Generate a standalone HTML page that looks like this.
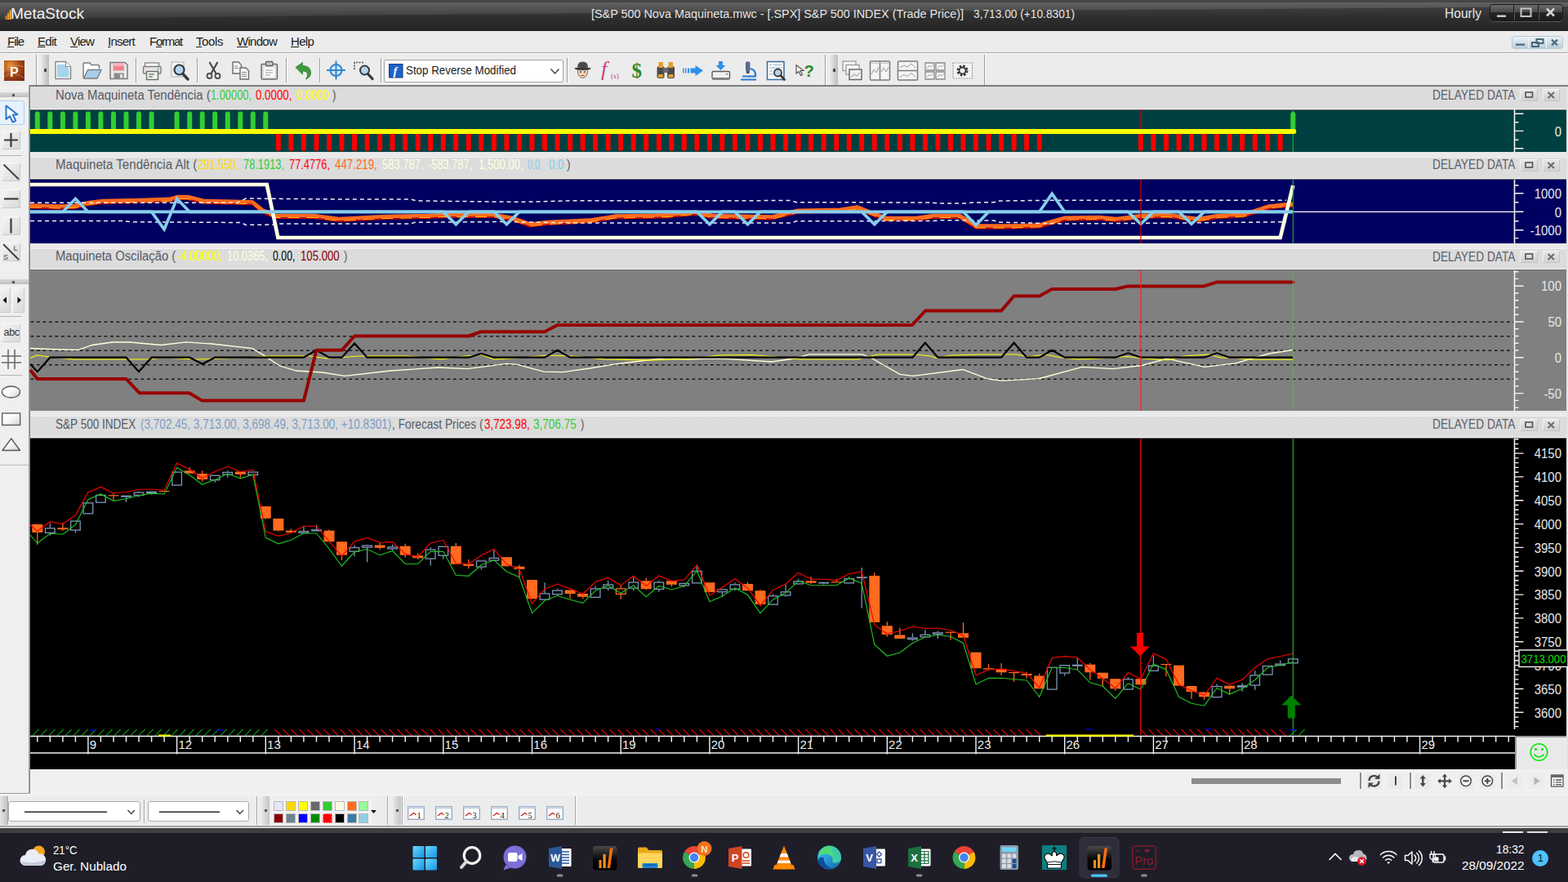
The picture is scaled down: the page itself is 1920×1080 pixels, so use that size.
<!DOCTYPE html>
<html lang="pt"><head><meta charset="utf-8"><title>MetaStock - S&amp;P 500 Nova Maquineta</title>
<style>
html,body{margin:0;padding:0}
body{width:1920px;height:1080px;overflow:hidden;position:relative;background:#ebebeb;font-family:"Liberation Sans",Arial,sans-serif}
.t{position:absolute;white-space:pre;display:block}
.a{position:absolute}
svg{position:absolute;overflow:visible}
.hdr{position:absolute;left:37px;width:1881px;background:#dcdcdc}
.btn{position:absolute;width:21.5px;height:15px;border:1px solid #c4c4c4;border-top-color:#f8f8f8;border-left-color:#f0f0f0;background:linear-gradient(#e6e6e6,#d2d2d2);box-sizing:border-box}
.lb{position:absolute;left:4px;width:26px;height:26px;box-sizing:border-box;border:1px solid #c9c9c9;border-top-color:#fafafa;border-left-color:#f4f4f4;background:linear-gradient(135deg,#f4f4f4,#d9d9d9)}
</style></head><body>

<div class="a" style="left:0;top:0;width:1920px;height:38px;background:linear-gradient(#474747 0,#3f3f3f 20%,#2f2f2f 55%,#242424 100%)"></div>
<svg width="1920" height="38" style="left:0;top:0"><defs><linearGradient id="gl" x1="0" y1="0" x2="0" y2="1"><stop offset="0" stop-color="#fff" stop-opacity=".16"/><stop offset="1" stop-color="#fff" stop-opacity=".05"/></linearGradient></defs><path d="M0,3 H1920 V8 C1500,12 700,14 0,24 Z" fill="url(#gl)"/></svg>
<svg width="14" height="16" style="left:5px;top:8px"><rect x="1.5" y="11" width="2" height="5" fill="#e8861c"/><rect x="4" y="8" width="2" height="8" fill="#f09a28"/><rect x="6.5" y="4.5" width="2.4" height="11.5" fill="#f6a93a"/></svg>
<span class="t" style="left:12.5px;top:6.1px;font-size:19px;line-height:21.831px;color:#f2f2f2;transform:scaleX(1.0027);transform-origin:0 0;">MetaStock</span>
<span class="t" style="left:724.0px;top:7.8px;font-size:15.5px;line-height:17.8095px;color:#e6e6e6;transform:scaleX(0.9276);transform-origin:0 0;">[S&amp;P 500 Nova Maquineta.mwc - [.SPX] S&amp;P 500 INDEX (Trade Price)]</span>
<span class="t" style="left:1192.0px;top:7.8px;font-size:15.5px;line-height:17.8095px;color:#e6e6e6;transform:scaleX(0.8855);transform-origin:0 0;">3,713.00 (+10.8301)</span>
<span class="t" style="left:1769.0px;top:7.8px;font-size:16px;line-height:18.384px;color:#e8e8e8;transform:scaleX(0.9733);transform-origin:0 0;">Hourly</span>
<div class="a" style="left:1825px;top:6px;width:88px;height:19px;border-radius:3.5px;background:linear-gradient(#6a6a6a 0,#4a4a4a 45%,#262626 50%,#1a1a1a 100%);box-shadow:0 0 0 1px #1a1a1a,0 1px 0 1px #555"></div>
<div class="a" style="left:1853px;top:6px;width:1px;height:19px;background:#1c1c1c;box-shadow:1px 0 0 #5a5a5a"></div>
<div class="a" style="left:1883px;top:6px;width:1px;height:19px;background:#1c1c1c;box-shadow:1px 0 0 #5a5a5a"></div>
<svg width="90" height="21" style="left:1824px;top:5px"><rect x="9" y="13.5" width="11" height="2.4" fill="#d0d0d0"/><rect x="38.5" y="5.5" width="12" height="9.5" fill="none" stroke="#c4c4c4" stroke-width="2"/><path d="M70,5.5 L79,14.5 M79,5.5 L70,14.5" stroke="#d4d4d4" stroke-width="2.6"/></svg>
<div class="a" style="left:0;top:38px;width:1920px;height:26px;background:#ececec"></div>
<div class="a" style="left:0;top:64px;width:1920px;height:1px;background:#a9a9a9"></div>
<div class="a" style="left:0;top:65px;width:1920px;height:1px;background:#fbfbfb"></div>
<span class="t" style="left:9px;top:41.9px;font-size:15px;line-height:17px;color:#1c1c1c;letter-spacing:-1.042px"><u>F</u>ile</span>
<span class="t" style="left:46px;top:41.9px;font-size:15px;line-height:17px;color:#1c1c1c;letter-spacing:-0.712px"><u>E</u>dit</span>
<span class="t" style="left:86px;top:41.9px;font-size:15px;line-height:17px;color:#1c1c1c;letter-spacing:-0.810px"><u>V</u>iew</span>
<span class="t" style="left:132px;top:41.9px;font-size:15px;line-height:17px;color:#1c1c1c;letter-spacing:-0.752px"><u>I</u>nsert</span>
<span class="t" style="left:183px;top:41.9px;font-size:15px;line-height:17px;color:#1c1c1c;letter-spacing:-1.250px">F<u>o</u>rmat</span>
<span class="t" style="left:240px;top:41.9px;font-size:15px;line-height:17px;color:#1c1c1c;letter-spacing:-0.403px"><u>T</u>ools</span>
<span class="t" style="left:290px;top:41.9px;font-size:15px;line-height:17px;color:#1c1c1c;letter-spacing:-0.725px"><u>W</u>indow</span>
<span class="t" style="left:356px;top:41.9px;font-size:15px;line-height:17px;color:#1c1c1c;letter-spacing:-0.712px"><u>H</u>elp</span>
<div class="a" style="left:1851.5px;top:44.5px;width:61.5px;height:14.5px;border-radius:3px;background:linear-gradient(#eaf2f7 0,#d3e0e8 50%,#b9cdd8 100%);box-shadow:0 0 0 1px #b7cad6"></div>
<div class="a" style="left:1871px;top:45px;width:1px;height:14px;background:#f4f8fa"></div>
<div class="a" style="left:1893px;top:45px;width:1px;height:14px;background:#f4f8fa"></div>
<svg width="63" height="16" style="left:1851px;top:44px"><rect x="5" y="9.5" width="11" height="2.2" fill="#4b6878"/><rect x="25" y="8" width="8" height="5" fill="none" stroke="#4b6878" stroke-width="2"/><rect x="30.5" y="4" width="8" height="5" fill="none" stroke="#4b6878" stroke-width="2"/><path d="M49,4.5 L56,11.5 M56,4.5 L49,11.5" stroke="#4b6878" stroke-width="2.3"/></svg>
<div class="a" style="left:0;top:66px;width:1920px;height:38px;background:#ececec"></div>
<svg width="26" height="26" style="left:5px;top:73.500px"><defs><radialGradient id="pg" cx=".3" cy=".25" r="1"><stop offset="0" stop-color="#e8923a"/><stop offset=".45" stop-color="#a84a18"/><stop offset="1" stop-color="#6a1e10"/></radialGradient></defs><rect width="25" height="25" fill="url(#pg)"/><path d="M0,14 q8,-12 25,-6 M0,20 q12,-8 25,2" fill="none" stroke="#f0b070" stroke-width=".8" opacity=".6"/><text x="7" y="19.500" font-size="16" font-weight="bold" fill="#f6f6f6">P</text></svg>
<div class="a" style="left:43.5px;top:67px;width:1.300px;height:37px;background:#9c9c9c"></div><div class="a" style="left:44.8px;top:67px;width:1px;height:37px;background:#fbfbfb"></div>
<div class="a" style="left:51px;top:67px;width:9px;height:37px;background:linear-gradient(90deg,#e6e6e6,#bcbcbc)"></div>
<div class="a" style="left:54px;top:84px;width:3px;height:3.500px;background:#4a4a4a"></div>
<svg width="1160" height="38" style="left:60px;top:66px">
<path d="M8,9.500 h12.500 l6,6 v15 h-18.500z" fill="#fafafa" stroke="#8a8a8a" stroke-width="1.500"/><path d="M10,13 h9 l5.500,5 v10.500 h-14.500z" fill="#a6d4ee"/><path d="M20.500,9.500 v6 h6" fill="#fff" stroke="#8a8a8a" stroke-width="1.200"/><path d="M42,29 v-16.500 q0,-1.500 1.500,-1.500 h6.500 l2,2.500 h8 q1.500,0 1.500,1.500 v3" fill="#fdfdfd" stroke="#7c7c7c" stroke-width="1.500"/><path d="M42.500,30 l5,-10.500 h16.500 l-5,10.500z" fill="#a9cdea" stroke="#7c7c7c" stroke-width="1.400" stroke-linejoin="round"/><path d="M75,10.500 h18 l3,3 v17 h-21z" fill="#e9e9e9" stroke="#7c7c7c" stroke-width="1.500"/><rect x="78.500" y="11.500" width="13.500" height="9" fill="#f2828c"/><rect x="78.500" y="11.500" width="13.500" height="3.500" fill="#f8b4ba"/><rect x="79.500" y="23.500" width="12" height="7" fill="#8a8a8a"/><rect x="87" y="25" width="3" height="4.500" fill="#e4e4e4"/><rect x="117.500" y="11" width="17" height="6" fill="#fff" stroke="#7c7c7c" stroke-width="1.200"/><rect x="115.500" y="15.500" width="21.500" height="8.500" rx="1" fill="#e6e6e6" stroke="#7c7c7c" stroke-width="1.400"/><circle cx="133.500" cy="18.500" r="1" fill="#30c030"/><rect x="119.500" y="21.500" width="14" height="10" fill="#eef6ee" stroke="#6c6c6c" stroke-width="1.400"/><path d="M122,25 h7 M122,28 h5" stroke="#444" stroke-width="1.200"/><rect x="150" y="10" width="15" height="18" fill="#f4f4f4" stroke="#b0b0b0" stroke-width="1"/><circle cx="159.500" cy="19.500" r="6" fill="#b4d4f0" stroke="#3a3a3a" stroke-width="2.200"/><path d="M164,24.500 l6,6.500" stroke="#3a3a3a" stroke-width="3.500" stroke-linecap="round"/><path d="M196.500,10 l8,14 M206.500,10 l-8,14" stroke="#4a4a4a" stroke-width="2.200"/><circle cx="196.500" cy="27" r="3" fill="none" stroke="#4a4a4a" stroke-width="1.800"/><circle cx="206.500" cy="27" r="3" fill="none" stroke="#4a4a4a" stroke-width="1.800"/><path d="M225,10 h7 l3.500,3.500 v10.500 h-10.500z" fill="#f4f4f4" stroke="#6c6c6c" stroke-width="1.400"/><path d="M234,17 h7 l3.500,3.500 v10.500 h-10.500z" fill="#f4f4f4" stroke="#6c6c6c" stroke-width="1.400"/><path d="M236,22.500 h6 M236,25 h6 M236,27.500 h6 M227,15 h4 M227,17.500 h5" stroke="#8a8a8a" stroke-width="1"/><rect x="260" y="12.500" width="19.500" height="18.500" rx="1.500" fill="#dcdcdc" stroke="#6c6c6c" stroke-width="1.500"/><rect x="265.500" y="9.500" width="8.500" height="5" rx="1" fill="#c8c8c8" stroke="#5c5c5c" stroke-width="1.300"/><rect x="263" y="16.500" width="13.500" height="12" fill="#fafafa"/><path d="M265,20 h9 M265,23 h9 M265,26 h6" stroke="#9a9a9a" stroke-width="1"/><path d="M302,16.500 l8.500,-6 v4 q10,0 10,9 q0,5 -6,7.500 q2.500,-3 2,-6 q-.5,-4 -6,-4 v4z" fill="#3f9a3f" stroke="#2c7c2c" stroke-width=".800"/><circle cx="351.500" cy="20" r="7" fill="#dceaf6" stroke="#2a86d0" stroke-width="2"/><path d="M351.500,8.500 v23 M340,20 h23" stroke="#2a86d0" stroke-width="2"/><path d="M374,19 v-8.500 h12" fill="none" stroke="#4a4a4a" stroke-width="1.600" stroke-dasharray="2 1.500"/><circle cx="386.500" cy="20" r="5.500" fill="#b4d4f0" stroke="#3a3a3a" stroke-width="2"/><path d="M390.500,24.500 l5.500,6" stroke="#3a3a3a" stroke-width="3.300" stroke-linecap="round"/><ellipse cx="653.500" cy="22" rx="6" ry="7.500" fill="#f2d0b0" stroke="#6a5a4a" stroke-width=".800"/><path d="M643,17.500 q10.500,-3 21,0 q-1,2.500 -10.500,2.500 q-9.500,0 -10.500,-2.500z" fill="#3a3a3a"/><path d="M647,16.500 q0,-7 6.500,-7 q6.500,0 6.500,7z" fill="#4a4a4a"/><circle cx="651" cy="22" r="1" fill="#2a5a9a"/><circle cx="656" cy="22" r="1" fill="#2a5a9a"/><path d="M651.500,26.500 h4" stroke="#a04040" stroke-width="1"/><text x="676" y="27" font-size="26" font-style="italic" fill="#c8407c" font-family="Liberation Serif,serif">f</text><text x="688" y="30" font-size="8.500" fill="#c8407c" font-family="Liberation Serif,serif">(x)</text><text x="713.500" y="29" font-size="25" font-weight="bold" fill="#2c8a2c" font-family="Liberation Serif,serif">$</text><rect x="744.500" y="15" width="9" height="15" rx="2.500" fill="#4a4a4a"/><rect x="757" y="15" width="9" height="15" rx="2.500" fill="#4a4a4a"/><rect x="746.500" y="10" width="5.500" height="7" fill="#e0a030"/><rect x="758.500" y="10" width="5.500" height="7" fill="#e0a030"/><rect x="752" y="17" width="6.500" height="6" fill="#6a6a6a"/><rect x="746" y="25" width="6" height="4" fill="#e0a030"/><rect x="758.500" y="25" width="6" height="4" fill="#e0a030"/><path d="M776,17.500 h1.500 v6 h-1.500z M779,17.500 h1.500 v6 h-1.500z M782,17.500 h2 v6 h-2z M785.500,17.500 h6 v-3.500 l9.500,6.500 l-9.500,6.500 v-3.500 h-6z" fill="#2e90e8"/><path d="M820,9 h5 v5 h3.500 l-6,6 l-6,-6 h3.500z" fill="#2e90e8"/><rect x="812" y="21.500" width="21.500" height="8.500" rx="1" fill="#f0f0f0" stroke="#5a5a5a" stroke-width="1.400"/><rect x="829" y="24" width="2" height="1.500" fill="#30b030"/><path d="M812,31.500 h21.500" stroke="#8a8a8a" stroke-width="1"/><rect x="853" y="9.500" width="5.500" height="12" rx="1.500" fill="#5a6a8a"/><rect x="854" y="21" width="3.500" height="3" fill="#3a4a6a"/><path d="M859,18 q7,2 6,9.500 h-8" fill="none" stroke="#2a7ad0" stroke-width="2.200"/><path d="M847,31.500 h19 M849,27.500 h10" stroke="#2a7ad0" stroke-width="2.200"/><rect x="879.500" y="9.500" width="20.500" height="22" fill="#fbfbfb" stroke="#3a6a9a" stroke-width="1.500"/><path d="M882,13.500 h3 M886.500,13.500 h11 M882,17 h15 M882,21 h4 M882,25 h8" stroke="#9ab0c8" stroke-width="1.200"/><circle cx="892.500" cy="23" r="4.500" fill="#b4d4f0" stroke="#3a3a3a" stroke-width="1.800"/><path d="M896,26.500 l4.500,5" stroke="#3a3a3a" stroke-width="2.800" stroke-linecap="round"/><path d="M915,13.500 v10.500 l3,-2.500 l2.500,5 l2,-1 l-2.500,-5 h4z" fill="#f4f4f4" stroke="#4a4a4a" stroke-width="1.100"/><text x="924.500" y="28" font-size="20" font-weight="bold" fill="#2c8a2c">?</text><rect x="972" y="9" width="16" height="11.500" fill="#f6f6f6" stroke="#9a9a9a" stroke-width="1.300"/><rect x="976" y="13.500" width="16" height="11.500" fill="#f6f6f6" stroke="#9a9a9a" stroke-width="1.300"/><rect x="980" y="19" width="15" height="12.500" fill="#f0f0f0" stroke="#6a6a6a" stroke-width="1.500"/><path d="M982,28.500 l4,-3.500 l3,2 l4,-4" fill="none" stroke="#8a8a8a" stroke-width="1"/><rect x="1005.500" y="9" width="24" height="23" rx="1" fill="#f4f4f4" stroke="#7a7a7a" stroke-width="1.500"/><path d="M1017.500,9 v23" stroke="#7a7a7a" stroke-width="1.500"/><path d="M1007,25 l3,-6 l3,4 l3,-7 M1019,22 l3,-5 l3,5 l3,-6" fill="none" stroke="#9a9a9a" stroke-width="1"/><path d="M1006,11.500 h23" stroke="#c0c0c0" stroke-width="1"/><rect x="1039.500" y="9" width="24" height="23" rx="1" fill="#f4f4f4" stroke="#7a7a7a" stroke-width="1.500"/><path d="M1039.500,20.500 h24" stroke="#7a7a7a" stroke-width="1.500"/><path d="M1042,17 l5,-3 l4,2 l5,-4 l5,5 M1042,28.500 l5,-3 l4,2 l5,-4 l5,5" fill="none" stroke="#9a9a9a" stroke-width="1"/><path d="M1073,11 h11 v9 h-11z M1086,11 h11 v9 h-11z M1073,22 h11 v9 h-11z M1086,22 h11 v9 h-11z" fill="#f4f4f4" stroke="#8a8a8a" stroke-width="1.300"/><path d="M1075,18 l3,-4 l2,2 l3,-3 M1088,18 l3,-4 l2,2 l3,-3 M1075,29 l3,-4 l2,2 l3,-3 M1088,29 l3,-4 l2,2 l3,-3" fill="none" stroke="#a0a0a0" stroke-width=".900"/><rect x="1107" y="11" width="23.500" height="19" fill="#f2f2f2" stroke="#9a9a9a" stroke-width="1.200" stroke-dasharray="2 1.200"/><circle cx="1118.500" cy="20.500" r="5.300" fill="none" stroke="#3a3a3a" stroke-width="3.400" stroke-dasharray="2.400 1.760"/><circle cx="1118.500" cy="20.500" r="4" fill="none" stroke="#3a3a3a" stroke-width="1.800"/>
</svg>
<div class="a" style="left:165.5px;top:71px;width:1.300px;height:30px;background:#9c9c9c"></div><div class="a" style="left:166.8px;top:71px;width:1px;height:30px;background:#fbfbfb"></div>
<div class="a" style="left:240.5px;top:71px;width:1.300px;height:30px;background:#9c9c9c"></div><div class="a" style="left:241.8px;top:71px;width:1px;height:30px;background:#fbfbfb"></div>
<div class="a" style="left:349.5px;top:71px;width:1.300px;height:30px;background:#9c9c9c"></div><div class="a" style="left:350.8px;top:71px;width:1px;height:30px;background:#fbfbfb"></div>
<div class="a" style="left:390.5px;top:71px;width:1.300px;height:30px;background:#9c9c9c"></div><div class="a" style="left:391.8px;top:71px;width:1px;height:30px;background:#fbfbfb"></div>
<div class="a" style="left:465.5px;top:71px;width:1.300px;height:30px;background:#9c9c9c"></div><div class="a" style="left:466.8px;top:71px;width:1px;height:30px;background:#fbfbfb"></div>
<div class="a" style="left:693.5px;top:71px;width:1.300px;height:30px;background:#9c9c9c"></div><div class="a" style="left:694.8px;top:71px;width:1px;height:30px;background:#fbfbfb"></div>
<div class="a" style="left:1009.5px;top:67px;width:1.300px;height:37px;background:#9c9c9c"></div><div class="a" style="left:1010.8px;top:67px;width:1px;height:37px;background:#fbfbfb"></div>
<div class="a" style="left:1017px;top:67px;width:9px;height:37px;background:linear-gradient(90deg,#e6e6e6,#bcbcbc)"></div>
<div class="a" style="left:1020px;top:84px;width:3px;height:3.500px;background:#4a4a4a"></div>
<div class="a" style="left:1204.5px;top:67px;width:1.300px;height:37px;background:#9c9c9c"></div><div class="a" style="left:1205.8px;top:67px;width:1px;height:37px;background:#fbfbfb"></div>
<div class="a" style="left:470px;top:72.500px;width:220px;height:28px;box-sizing:border-box;background:#fff;border:1.300px solid #a4a4a4;border-radius:2px"></div>
<svg width="18" height="18" style="left:475.500px;top:78px"><rect x=".5" y=".5" width="16.500" height="16.500" fill="#1c62c8" stroke="#0c3c8c" stroke-width="1"/><text x="5.500" y="14" font-size="14.500" font-style="italic" font-weight="bold" fill="#fff" font-family="Liberation Serif,serif">f</text></svg>
<span class="t" style="left:497.0px;top:77.1px;font-size:15px;line-height:17.235px;color:#1c1c1c;transform:scaleX(0.8897);transform-origin:0 0;">Stop Reverse Modified</span>
<svg width="14" height="10" style="left:672.500px;top:82.500px"><path d="M1.500,1.500 l5,5.500 l5,-5.500" fill="none" stroke="#444" stroke-width="1.500"/></svg>
<div class="a" style="left:0;top:104px;width:37px;height:1px;background:#d4d4d4"></div>
<div class="a" style="left:0;top:104px;width:35px;height:868px;background:#efefef"></div>
<div class="a" style="left:35px;top:104px;width:2px;height:868px;background:linear-gradient(90deg,#b0b0b0,#7c7c7c)"></div>
<div class="a" style="left:0;top:113px;width:35px;height:6px;background:linear-gradient(#d8d8d8,#bdbdbd)"></div>
<div class="a" style="left:15px;top:115px;width:3px;height:3px;background:#555"></div>
<div class="a" style="left:0;top:342px;width:35px;height:6px;background:linear-gradient(#d8d8d8,#bdbdbd)"></div>
<div class="a" style="left:15px;top:344px;width:3px;height:3px;background:#555"></div>
<div class="a" style="left:-2px;top:123px;width:32px;height:30px;box-sizing:border-box;border:1.5px solid #a8d0f4;border-radius:3px;background:#e6f1fb"></div>
<svg width="22" height="26" style="left:5px;top:127px"><path d="M2.5,2.5 L2.5,19 L7,15.2 L10.6,22.5 L14.2,20.8 L10.8,13.6 L16.5,13.2 Z" fill="#fdfeff" stroke="#2e74c8" stroke-width="2" stroke-linejoin="round"/></svg>
<div class="lb" style="left:2px;top:160px;width:23px;height:23px"></div>
<svg width="23" height="23" style="left:2px;top:160px"><path d="M3,11.5 H20 M11.5,3 V20" stroke="#3c3c3c" stroke-width="2.2"/></svg>
<div class="a" style="left:0;top:190px;width:27px;height:1px;background:#b4b4b4"></div>
<div class="lb" style="left:2px;top:199px;width:23px;height:23px"></div>
<svg width="23" height="23" style="left:2px;top:199px"><path d="M2.5,2.5 L21,20.5" stroke="#3c3c3c" stroke-width="1.8"/></svg>
<div class="lb" style="left:2px;top:232px;width:23px;height:23px"></div>
<svg width="23" height="23" style="left:2px;top:232px"><path d="M3,11.5 H20.5" stroke="#3c3c3c" stroke-width="2.2"/></svg>
<div class="lb" style="left:2px;top:265px;width:23px;height:23px"></div>
<svg width="23" height="23" style="left:2px;top:265px"><path d="M11.5,2.5 V20.5" stroke="#3c3c3c" stroke-width="2.2"/></svg>
<div class="lb" style="left:2px;top:297px;width:23px;height:23px"></div>
<svg width="23" height="23" style="left:2px;top:297px"><path d="M2,2 L21,21" stroke="#3c3c3c" stroke-width="1.8"/><text x="14.5" y="9.5" font-size="9" fill="#3c3c3c">L</text><text x="2" y="21" font-size="9" fill="#3c3c3c">S</text></svg>
<div class="lb" style="left:-1px;top:352px;width:14px;height:31px"></div><div class="lb" style="left:15px;top:352px;width:15px;height:31px"></div>
<svg width="32" height="31" style="left:0;top:352px"><path d="M3.5,15.5 L8,11.5 V19.5 Z M26,15.5 L21.5,11.5 V19.5 Z" fill="#111"/></svg>
<div class="a" style="left:0;top:387px;width:27px;height:1px;background:#b4b4b4"></div>
<div class="lb" style="left:2px;top:396px;width:23px;height:23px"></div>
<span class="t" style="left:4.5px;top:400px;font-size:12.5px;line-height:14px;color:#333;letter-spacing:-.3px">abc</span>
<svg width="25" height="25" style="left:2px;top:428px"><rect x="0" y="0" width="24" height="24" fill="#f2f2f2"/><path d="M8,0 V24 M16,0 V24 M0,8 H24 M0,16 H24" stroke="#6a6a6a" stroke-width="1.6"/></svg>
<div class="a" style="left:0;top:459px;width:27px;height:1px;background:#b4b4b4"></div>
<svg width="28" height="20" style="left:0;top:470px"><defs><linearGradient id="eg" x1="0" y1="0" x2="1" y2="1"><stop offset="0" stop-color="#fff"/><stop offset=".45" stop-color="#fafafa"/><stop offset="1" stop-color="#cfcfcf"/></linearGradient></defs><ellipse cx="13.5" cy="10" rx="11" ry="7" fill="url(#eg)" stroke="#555" stroke-width="1.3"/></svg>
<svg width="28" height="20" style="left:0;top:504px"><rect x="2.7" y="2" width="22" height="14.5" fill="url(#eg)" stroke="#555" stroke-width="1.3"/></svg>
<svg width="28" height="20" style="left:0;top:535px"><path d="M13.8,2 L24.5,16.5 H3 Z" fill="url(#eg)" stroke="#555" stroke-width="1.3" stroke-linejoin="round"/></svg>
<div class="a" style="left:0;top:569px;width:35px;height:1px;background:#b9b9b9"></div>
<div class="a" style="left:37px;top:104px;width:1883px;height:2px;background:linear-gradient(#8c8c8c,#6e6e6e)"></div>
<div class="a" style="left:1918px;top:106px;width:2px;height:866px;background:#e4e4e4"></div>
<div class="hdr" style="top:106px;height:26.6px"></div>
<div class="a" style="left:37px;top:132.6px;width:1881px;height:1px;background:#f2f2f2"></div>
<div class="a" style="left:37px;top:133.6px;width:1881px;height:1px;background:#6a6a6a"></div>
<div class="a" style="left:37px;top:134.6px;width:1881px;height:51.4px;background:#004040"></div>
<span class="t" style="left:1753.5px;top:108.0px;font-size:16px;line-height:18.384px;color:#5a5e6c;transform:scaleX(0.8583);transform-origin:0 0;">DELAYED DATA</span>
<div class="btn" style="left:1861px;top:109.3px"></div>
<div class="btn" style="left:1889px;top:109.3px;width:21px"></div>
<svg width="50" height="14" style="left:1862px;top:109.3px"><rect x="6" y="4" width="8.5" height="6" fill="none" stroke="#5a5a5a" stroke-width="1.7"/><path d="M33.5,4 L41,11 M41,4 L33.5,11" stroke="#6c6c6c" stroke-width="2.1"/></svg>
<div class="a" style="left:37px;top:186px;width:1881px;height:7px;background:linear-gradient(#e2e2e2,#ececec 40%,#e6e6e6 75%,#f6f6f6 100%)"></div>
<div class="hdr" style="top:193px;height:25.0px"></div>
<div class="a" style="left:37px;top:218.0px;width:1881px;height:1px;background:#f2f2f2"></div>
<div class="a" style="left:37px;top:219.0px;width:1881px;height:1px;background:#6a6a6a"></div>
<div class="a" style="left:37px;top:220.0px;width:1881px;height:78.0px;background:#000060"></div>
<span class="t" style="left:1753.5px;top:193.0px;font-size:16px;line-height:18.384px;color:#5a5e6c;transform:scaleX(0.8583);transform-origin:0 0;">DELAYED DATA</span>
<div class="btn" style="left:1861px;top:195.0px"></div>
<div class="btn" style="left:1889px;top:195.0px;width:21px"></div>
<svg width="50" height="14" style="left:1862px;top:195.0px"><rect x="6" y="4" width="8.5" height="6" fill="none" stroke="#5a5a5a" stroke-width="1.7"/><path d="M33.5,4 L41,11 M41,4 L33.5,11" stroke="#6c6c6c" stroke-width="2.1"/></svg>
<div class="a" style="left:37px;top:298px;width:1881px;height:7px;background:linear-gradient(#e2e2e2,#ececec 40%,#e6e6e6 75%,#f6f6f6 100%)"></div>
<div class="hdr" style="top:305px;height:24.0px"></div>
<div class="a" style="left:37px;top:329.0px;width:1881px;height:1px;background:#f2f2f2"></div>
<div class="a" style="left:37px;top:330.0px;width:1881px;height:1px;background:#6a6a6a"></div>
<div class="a" style="left:37px;top:331.0px;width:1881px;height:172.0px;background:#808080"></div>
<span class="t" style="left:1753.5px;top:305.5px;font-size:16px;line-height:18.384px;color:#5a5e6c;transform:scaleX(0.8583);transform-origin:0 0;">DELAYED DATA</span>
<div class="btn" style="left:1861px;top:307.3px"></div>
<div class="btn" style="left:1889px;top:307.3px;width:21px"></div>
<svg width="50" height="14" style="left:1862px;top:307.3px"><rect x="6" y="4" width="8.5" height="6" fill="none" stroke="#5a5a5a" stroke-width="1.7"/><path d="M33.5,4 L41,11 M41,4 L33.5,11" stroke="#6c6c6c" stroke-width="2.1"/></svg>
<div class="a" style="left:37px;top:503px;width:1881px;height:7px;background:linear-gradient(#e2e2e2,#ececec 40%,#e6e6e6 75%,#f6f6f6 100%)"></div>
<div class="hdr" style="top:510px;height:25.0px"></div>
<div class="a" style="left:37px;top:535.0px;width:1881px;height:1px;background:#f2f2f2"></div>
<div class="a" style="left:37px;top:536.0px;width:1881px;height:1px;background:#6a6a6a"></div>
<div class="a" style="left:37px;top:537.0px;width:1881px;height:364.0px;background:#000000"></div>
<span class="t" style="left:1753.5px;top:510.8px;font-size:16px;line-height:18.384px;color:#5a5e6c;transform:scaleX(0.8583);transform-origin:0 0;">DELAYED DATA</span>
<div class="btn" style="left:1861px;top:512.7px"></div>
<div class="btn" style="left:1889px;top:512.7px;width:21px"></div>
<svg width="50" height="14" style="left:1862px;top:512.7px"><rect x="6" y="4" width="8.5" height="6" fill="none" stroke="#5a5a5a" stroke-width="1.7"/><path d="M33.5,4 L41,11 M41,4 L33.5,11" stroke="#6c6c6c" stroke-width="2.1"/></svg>
<span class="t" style="left:68.3px;top:107.8px;font-size:16px;line-height:18.384px;color:#555a66;transform:scaleX(0.9328);transform-origin:0 0;">Nova Maquineta Tendência (</span>
<span class="t" style="left:258.3px;top:107.8px;font-size:16px;line-height:18.384px;color:#32cd32;transform:scaleX(0.8029);transform-origin:0 0;">1.00000,</span>
<span class="t" style="left:313.3px;top:107.8px;font-size:16px;line-height:18.384px;color:#ff0000;transform:scaleX(0.8318);transform-origin:0 0;">0.0000,</span>
<span class="t" style="left:362.7px;top:107.8px;font-size:16px;line-height:18.384px;color:#ffff00;transform:scaleX(0.8175);transform-origin:0 0;">0.0000</span>
<span class="t" style="left:407.0px;top:107.8px;font-size:16px;line-height:18.384px;color:#555a66;transform:scaleX(0.8447);transform-origin:0 0;">)</span>
<span class="t" style="left:68.3px;top:192.8px;font-size:16px;line-height:18.384px;color:#555a66;transform:scaleX(0.9423);transform-origin:0 0;">Maquineta Tendência Alt (</span>
<span class="t" style="left:241.7px;top:192.8px;font-size:16px;line-height:18.384px;color:#ffd700;transform:scaleX(0.8029);transform-origin:0 0;">291.550,</span>
<span class="t" style="left:298.3px;top:192.8px;font-size:16px;line-height:18.384px;color:#32cd32;transform:scaleX(0.8029);transform-origin:0 0;">78.1913,</span>
<span class="t" style="left:354.3px;top:192.8px;font-size:16px;line-height:18.384px;color:#ff0000;transform:scaleX(0.8029);transform-origin:0 0;">77.4776,</span>
<span class="t" style="left:410.0px;top:192.8px;font-size:16px;line-height:18.384px;color:#ff6a1e;transform:scaleX(0.8302);transform-origin:0 0;">447.219,</span>
<span class="t" style="left:467.7px;top:192.8px;font-size:16px;line-height:18.384px;color:#ffffe0;transform:scaleX(0.8125);transform-origin:0 0;">583.787,</span>
<span class="t" style="left:524.0px;top:192.8px;font-size:16px;line-height:18.384px;color:#ffffe0;transform:scaleX(0.8032);transform-origin:0 0;">-583.787,</span>
<span class="t" style="left:585.7px;top:192.8px;font-size:16px;line-height:18.384px;color:#ffffe0;transform:scaleX(0.8213);transform-origin:0 0;">1,500.00,</span>
<span class="t" style="left:645.5px;top:192.8px;font-size:16px;line-height:18.384px;color:#87ceeb;transform:scaleX(0.6670);transform-origin:0 0;">0.0,</span>
<span class="t" style="left:671.7px;top:192.8px;font-size:16px;line-height:18.384px;color:#87ceeb;transform:scaleX(0.8228);transform-origin:0 0;">0.0</span>
<span class="t" style="left:693.8px;top:192.8px;font-size:16px;line-height:18.384px;color:#555a66;transform:scaleX(0.8447);transform-origin:0 0;">)</span>
<span class="t" style="left:68.3px;top:305.3px;font-size:16px;line-height:18.384px;color:#555a66;transform:scaleX(0.9248);transform-origin:0 0;">Maquineta Oscilação (</span>
<span class="t" style="left:216.5px;top:305.3px;font-size:16px;line-height:18.384px;color:#ffff00;transform:scaleX(0.8165);transform-origin:0 0;">-4.00000,</span>
<span class="t" style="left:278.3px;top:305.3px;font-size:16px;line-height:18.384px;color:#ffffe0;transform:scaleX(0.8029);transform-origin:0 0;">10.0365,</span>
<span class="t" style="left:334.3px;top:305.3px;font-size:16px;line-height:18.384px;color:#000000;transform:scaleX(0.7700);transform-origin:0 0;">0.00,</span>
<span class="t" style="left:368.3px;top:305.3px;font-size:16px;line-height:18.384px;color:#8b0000;transform:scaleX(0.8248);transform-origin:0 0;">105.000</span>
<span class="t" style="left:420.7px;top:305.3px;font-size:16px;line-height:18.384px;color:#555a66;transform:scaleX(0.8071);transform-origin:0 0;">)</span>
<span class="t" style="left:68.3px;top:510.6px;font-size:16px;line-height:18.384px;color:#555a66;transform:scaleX(0.8467);transform-origin:0 0;">S&amp;P 500 INDEX</span>
<span class="t" style="left:171.7px;top:510.6px;font-size:16px;line-height:18.384px;color:#7b9cc4;transform:scaleX(0.8477);transform-origin:0 0;">(3,702.45, 3,713.00, 3,698.49, 3,713.00, +10.8301)</span>
<span class="t" style="left:480.0px;top:510.6px;font-size:16px;line-height:18.384px;color:#555a66;transform:scaleX(0.8590);transform-origin:0 0;">, Forecast Prices (</span>
<span class="t" style="left:592.5px;top:510.6px;font-size:16px;line-height:18.384px;color:#ff0000;transform:scaleX(0.8363);transform-origin:0 0;">3,723.98,</span>
<span class="t" style="left:653.3px;top:510.6px;font-size:16px;line-height:18.384px;color:#32cd32;transform:scaleX(0.8462);transform-origin:0 0;">3,706.75</span>
<span class="t" style="left:710.7px;top:510.6px;font-size:16px;line-height:18.384px;color:#555a66;transform:scaleX(0.8071);transform-origin:0 0;">)</span>
<svg width="1920" height="1080" style="left:0;top:0" shape-rendering="auto">
<path d="M1580.3,161 v-22 l3,-3.5 l3,3.5 v22 z" fill="#32cd32"/>
<rect x="42.8" y="136.5" width="6" height="25" rx="3" fill="#32cd32"/>
<rect x="58.3" y="136.5" width="6" height="25" rx="3" fill="#32cd32"/>
<rect x="73.9" y="136.5" width="6" height="25" rx="3" fill="#32cd32"/>
<rect x="89.4" y="136.5" width="6" height="25" rx="3" fill="#32cd32"/>
<rect x="104.9" y="136.5" width="6" height="25" rx="3" fill="#32cd32"/>
<rect x="120.4" y="136.5" width="6" height="25" rx="3" fill="#32cd32"/>
<rect x="136.0" y="136.5" width="6" height="25" rx="3" fill="#32cd32"/>
<rect x="151.5" y="136.5" width="6" height="25" rx="3" fill="#32cd32"/>
<rect x="167.0" y="136.5" width="6" height="25" rx="3" fill="#32cd32"/>
<rect x="182.6" y="136.5" width="6" height="25" rx="3" fill="#32cd32"/>
<rect x="213.6" y="136.5" width="6" height="25" rx="3" fill="#32cd32"/>
<rect x="229.2" y="136.5" width="6" height="25" rx="3" fill="#32cd32"/>
<rect x="244.7" y="136.5" width="6" height="25" rx="3" fill="#32cd32"/>
<rect x="260.2" y="136.5" width="6" height="25" rx="3" fill="#32cd32"/>
<rect x="275.8" y="136.5" width="6" height="25" rx="3" fill="#32cd32"/>
<rect x="291.3" y="136.5" width="6" height="25" rx="3" fill="#32cd32"/>
<rect x="306.8" y="136.5" width="6" height="25" rx="3" fill="#32cd32"/>
<rect x="322.3" y="136.5" width="6" height="25" rx="3" fill="#32cd32"/>
<rect x="337.9" y="160" width="6" height="25" rx="3" fill="#ff0000"/>
<rect x="353.4" y="160" width="6" height="25" rx="3" fill="#ff0000"/>
<rect x="368.9" y="160" width="6" height="25" rx="3" fill="#ff0000"/>
<rect x="384.5" y="160" width="6" height="25" rx="3" fill="#ff0000"/>
<rect x="400.0" y="160" width="6" height="25" rx="3" fill="#ff0000"/>
<rect x="415.5" y="160" width="6" height="25" rx="3" fill="#ff0000"/>
<rect x="431.1" y="160" width="6" height="25" rx="3" fill="#ff0000"/>
<rect x="446.6" y="160" width="6" height="25" rx="3" fill="#ff0000"/>
<rect x="462.1" y="160" width="6" height="25" rx="3" fill="#ff0000"/>
<rect x="477.6" y="160" width="6" height="25" rx="3" fill="#ff0000"/>
<rect x="493.2" y="160" width="6" height="25" rx="3" fill="#ff0000"/>
<rect x="508.7" y="160" width="6" height="25" rx="3" fill="#ff0000"/>
<rect x="524.2" y="160" width="6" height="25" rx="3" fill="#ff0000"/>
<rect x="539.8" y="160" width="6" height="25" rx="3" fill="#ff0000"/>
<rect x="555.3" y="160" width="6" height="25" rx="3" fill="#ff0000"/>
<rect x="570.8" y="160" width="6" height="25" rx="3" fill="#ff0000"/>
<rect x="586.3" y="160" width="6" height="25" rx="3" fill="#ff0000"/>
<rect x="601.9" y="160" width="6" height="25" rx="3" fill="#ff0000"/>
<rect x="617.4" y="160" width="6" height="25" rx="3" fill="#ff0000"/>
<rect x="632.9" y="160" width="6" height="25" rx="3" fill="#ff0000"/>
<rect x="648.5" y="160" width="6" height="25" rx="3" fill="#ff0000"/>
<rect x="664.0" y="160" width="6" height="25" rx="3" fill="#ff0000"/>
<rect x="679.5" y="160" width="6" height="25" rx="3" fill="#ff0000"/>
<rect x="695.1" y="160" width="6" height="25" rx="3" fill="#ff0000"/>
<rect x="710.6" y="160" width="6" height="25" rx="3" fill="#ff0000"/>
<rect x="726.1" y="160" width="6" height="25" rx="3" fill="#ff0000"/>
<rect x="741.6" y="160" width="6" height="25" rx="3" fill="#ff0000"/>
<rect x="757.2" y="160" width="6" height="25" rx="3" fill="#ff0000"/>
<rect x="772.7" y="160" width="6" height="25" rx="3" fill="#ff0000"/>
<rect x="788.2" y="160" width="6" height="25" rx="3" fill="#ff0000"/>
<rect x="803.8" y="160" width="6" height="25" rx="3" fill="#ff0000"/>
<rect x="819.3" y="160" width="6" height="25" rx="3" fill="#ff0000"/>
<rect x="834.8" y="160" width="6" height="25" rx="3" fill="#ff0000"/>
<rect x="850.4" y="160" width="6" height="25" rx="3" fill="#ff0000"/>
<rect x="865.9" y="160" width="6" height="25" rx="3" fill="#ff0000"/>
<rect x="881.4" y="160" width="6" height="25" rx="3" fill="#ff0000"/>
<rect x="896.9" y="160" width="6" height="25" rx="3" fill="#ff0000"/>
<rect x="912.5" y="160" width="6" height="25" rx="3" fill="#ff0000"/>
<rect x="928.0" y="160" width="6" height="25" rx="3" fill="#ff0000"/>
<rect x="943.5" y="160" width="6" height="25" rx="3" fill="#ff0000"/>
<rect x="959.1" y="160" width="6" height="25" rx="3" fill="#ff0000"/>
<rect x="974.6" y="160" width="6" height="25" rx="3" fill="#ff0000"/>
<rect x="990.1" y="160" width="6" height="25" rx="3" fill="#ff0000"/>
<rect x="1005.7" y="160" width="6" height="25" rx="3" fill="#ff0000"/>
<rect x="1021.2" y="160" width="6" height="25" rx="3" fill="#ff0000"/>
<rect x="1036.7" y="160" width="6" height="25" rx="3" fill="#ff0000"/>
<rect x="1052.2" y="160" width="6" height="25" rx="3" fill="#ff0000"/>
<rect x="1067.8" y="160" width="6" height="25" rx="3" fill="#ff0000"/>
<rect x="1083.3" y="160" width="6" height="25" rx="3" fill="#ff0000"/>
<rect x="1098.8" y="160" width="6" height="25" rx="3" fill="#ff0000"/>
<rect x="1114.4" y="160" width="6" height="25" rx="3" fill="#ff0000"/>
<rect x="1129.9" y="160" width="6" height="25" rx="3" fill="#ff0000"/>
<rect x="1145.4" y="160" width="6" height="25" rx="3" fill="#ff0000"/>
<rect x="1161.0" y="160" width="6" height="25" rx="3" fill="#ff0000"/>
<rect x="1176.5" y="160" width="6" height="25" rx="3" fill="#ff0000"/>
<rect x="1192.0" y="160" width="6" height="25" rx="3" fill="#ff0000"/>
<rect x="1207.5" y="160" width="6" height="25" rx="3" fill="#ff0000"/>
<rect x="1223.1" y="160" width="6" height="25" rx="3" fill="#ff0000"/>
<rect x="1238.6" y="160" width="6" height="25" rx="3" fill="#ff0000"/>
<rect x="1254.1" y="160" width="6" height="25" rx="3" fill="#ff0000"/>
<rect x="1269.7" y="160" width="6" height="25" rx="3" fill="#ff0000"/>
<rect x="1393.9" y="160" width="6" height="25" rx="3" fill="#ff0000"/>
<rect x="1409.4" y="160" width="6" height="25" rx="3" fill="#ff0000"/>
<rect x="1425.0" y="160" width="6" height="25" rx="3" fill="#ff0000"/>
<rect x="1440.5" y="160" width="6" height="25" rx="3" fill="#ff0000"/>
<rect x="1456.0" y="160" width="6" height="25" rx="3" fill="#ff0000"/>
<rect x="1471.6" y="160" width="6" height="25" rx="3" fill="#ff0000"/>
<rect x="1487.1" y="160" width="6" height="25" rx="3" fill="#ff0000"/>
<rect x="1502.6" y="160" width="6" height="25" rx="3" fill="#ff0000"/>
<rect x="1518.1" y="160" width="6" height="25" rx="3" fill="#ff0000"/>
<rect x="1533.7" y="160" width="6" height="25" rx="3" fill="#ff0000"/>
<rect x="1549.2" y="160" width="6" height="25" rx="3" fill="#ff0000"/>
<rect x="1564.7" y="160" width="6" height="25" rx="3" fill="#ff0000"/>
<path d="M37,161 H1584.3" stroke="#ffff00" stroke-width="6" stroke-linecap="butt" fill="none"/>
<circle cx="1584.3" cy="161" r="3" fill="#ffff00"/>
<path d="M1396.9,134 V158" stroke="#e00000" stroke-width="1"/>
<path d="M1583.3,164 V186" stroke="#20c020" stroke-width="1"/>
<path d="M1854.5,134 V186" stroke="#f4f4f4" stroke-width="1.6" fill="none"/>
<path d="M1854.5,139.3 h11 M1854.5,160.4 h11 M1854.5,181.8 h11 M1854.5,149.8 h5 M1854.5,171.2 h5 " stroke="#f4f4f4" stroke-width="1.4" fill="none"/>
<text x="1912" y="166.5" text-anchor="end" font-size="16" fill="#ecece0" textLength="8.3" lengthAdjust="spacingAndGlyphs">0</text>
<path d="M1583.3,259.4 H1854.5" stroke="#ffffff" stroke-width="1.2"/>
<polyline points="37.0,254.7 72.0,255.7 92.0,255.2 109.0,251.2 126.0,249.2 172.0,248.2 207.0,247.0 217.5,244.2 230.0,244.2 249.0,249.0 309.0,250.5 322.0,260.9 338.0,267.2 384.0,267.2 415.0,271.2 472.0,268.2 524.0,267.2 545.0,266.2 605.0,266.2 628.0,270.2 649.0,277.6 670.0,275.2 722.0,272.8 753.0,267.8 816.0,266.5 852.0,263.0 872.0,267.2 945.0,268.8 977.0,260.9 1029.0,259.9 1050.0,256.7 1066.0,263.2 1085.0,270.2 1122.0,270.2 1143.0,267.2 1175.0,267.2 1195.0,279.7 1240.0,279.7 1273.0,278.6 1304.0,269.9 1346.0,269.2 1367.0,271.2 1398.0,267.2 1429.0,266.2 1467.0,271.2 1492.0,267.2 1523.0,265.7 1554.0,255.7 1583.0,252.6" fill="none" stroke="#d00000" stroke-width="1.6"/>
<polyline points="37.0,253.7 72.0,254.7 92.0,254.2 109.0,250.2 126.0,248.2 172.0,247.2 207.0,246.0 217.5,243.2 230.0,243.2 249.0,248.0 309.0,249.5 322.0,259.9 338.0,266.2 384.0,266.2 415.0,270.2 472.0,267.2 524.0,266.2 545.0,265.2 605.0,265.2 628.0,269.2 649.0,276.6 670.0,274.2 722.0,271.8 753.0,266.8 816.0,265.5 852.0,262.0 872.0,266.2 945.0,267.8 977.0,259.9 1029.0,258.9 1050.0,255.7 1066.0,262.2 1085.0,269.2 1122.0,269.2 1143.0,266.2 1175.0,266.2 1195.0,278.7 1240.0,278.7 1273.0,277.6 1304.0,268.9 1346.0,268.2 1367.0,270.2 1398.0,266.2 1429.0,265.2 1467.0,270.2 1492.0,266.2 1523.0,264.7 1554.0,254.7 1583.0,251.6" fill="none" stroke="#ffd700" stroke-width="1.4" stroke-dasharray="14 9"/>
<polyline points="37.0,251.5 72.0,252.5 92.0,252.0 109.0,248.0 126.0,246.0 172.0,245.0 207.0,243.8 217.5,241.0 230.0,241.0 249.0,245.8 309.0,247.3 322.0,257.7 338.0,264.0 384.0,264.0 415.0,268.0 472.0,265.0 524.0,264.0 545.0,263.0 605.0,263.0 628.0,267.0 649.0,274.4 670.0,272.0 722.0,269.6 753.0,264.6 816.0,263.3 852.0,259.8 872.0,264.0 945.0,265.6 977.0,257.7 1029.0,256.7 1050.0,253.5 1066.0,260.0 1085.0,267.0 1122.0,267.0 1143.0,264.0 1175.0,264.0 1195.0,276.5 1240.0,276.5 1273.0,275.4 1304.0,266.7 1346.0,266.0 1367.0,268.0 1398.0,264.0 1429.0,263.0 1467.0,268.0 1492.0,264.0 1523.0,262.5 1554.0,252.5 1583.0,249.4" fill="none" stroke="#ff6a1e" stroke-width="4.5" stroke-linejoin="round"/>
<polyline points="37.0,248.3 290.0,248.3 301.0,243.0 420.0,244.0 503.0,244.0 510.0,245.8 560.0,246.5 640.0,247.3 700.0,245.8 969.0,245.6 975.0,247.7 1140.0,248.0 1150.0,249.0 1185.0,249.0 1190.0,248.0 1217.0,247.7 1222.0,246.0 1300.0,245.2 1575.0,245.2" fill="none" stroke="#f0f0f0" stroke-width="1.5" stroke-dasharray="5 4"/>
<polyline points="37.0,270.6 150.0,270.6 160.0,271.7 295.0,272.5 301.0,275.4 335.0,275.0 340.0,274.0 503.0,274.0 508.0,272.3 620.0,271.5 700.0,273.0 969.0,273.0 975.0,270.8 1143.0,270.5 1150.0,269.6 1217.0,270.0 1222.0,272.0 1300.0,274.0 1450.0,273.0 1575.0,271.7" fill="none" stroke="#f0f0f0" stroke-width="1.5" stroke-dasharray="5 4"/>
<polyline points="37.0,226.0 326.8,226.0 340.4,291.0 1567.7,291.0 1583.3,227.0" fill="none" stroke="#ffffe0" stroke-width="4.6" stroke-linejoin="miter"/>
<path d="M37,259.4 H1583.3" stroke="#87ceeb" stroke-width="3.6"/>
<polyline points="37.0,259.4 45.8,259.4 61.3,259.4 76.9,259.4 92.4,243.3 107.9,259.4 123.4,259.4 139.0,259.4 154.5,259.4 170.0,259.4 185.6,259.4 201.1,280.8 216.6,243.3 232.2,259.4 247.7,259.4 263.2,259.4 278.8,259.4 294.3,259.4 309.8,259.4 325.3,259.4 340.9,259.4 356.4,259.4 371.9,259.4 387.5,259.4 403.0,259.4 418.5,259.4 434.1,259.4 449.6,259.4 465.1,259.4 480.6,259.4 496.2,259.4 511.7,259.4 527.2,259.4 542.8,259.4 558.3,274.8 573.8,259.4 589.3,259.4 604.9,259.4 620.4,274.8 635.9,259.4 651.5,259.4 667.0,259.4 682.5,259.4 698.1,259.4 713.6,259.4 729.1,259.4 744.6,259.4 760.2,259.4 775.7,259.4 791.2,259.4 806.8,259.4 822.3,259.4 837.8,259.4 853.4,259.4 868.9,274.8 884.4,259.4 899.9,259.4 915.5,274.8 931.0,259.4 946.5,259.4 962.1,259.4 977.6,259.4 993.1,259.4 1008.7,259.4 1024.2,259.4 1039.7,259.4 1055.2,259.4 1070.8,274.8 1086.3,259.4 1101.8,259.4 1117.4,259.4 1132.9,259.4 1148.4,259.4 1164.0,259.4 1179.5,259.4 1195.0,275.6 1210.5,259.4 1226.1,259.4 1241.6,259.4 1257.1,259.4 1272.7,259.4 1288.2,237.2 1303.7,259.4 1319.3,259.4 1334.8,259.4 1350.3,259.4 1365.8,259.4 1381.4,259.4 1396.9,274.2 1412.4,259.4 1428.0,259.4 1443.5,259.4 1459.0,274.2 1474.6,259.4 1490.1,259.4 1505.6,259.4 1521.1,259.4 1536.7,259.4 1552.2,259.4 1567.7,259.4 1583.3,259.4" fill="none" stroke="#87ceeb" stroke-width="3.6" stroke-linejoin="miter"/>
<path d="M1396.9,220 V298" stroke="#e00000" stroke-width="1.2"/>
<path d="M1583.3,220 V298" stroke="#20c020" stroke-width="1"/>
<path d="M1854.5,220 V298" stroke="#f4f4f4" stroke-width="1.6" fill="none"/>
<path d="M1854.5,236.7 h11 M1854.5,259.3 h11 M1854.5,281.8 h11 M1854.5,227.0 h5 M1854.5,247.8 h5 M1854.5,270.7 h5 M1854.5,291.6 h5 " stroke="#f4f4f4" stroke-width="1.4" fill="none"/>
<text x="1912" y="242.9" text-anchor="end" font-size="16" fill="#e8e8e8" textLength="33.3" lengthAdjust="spacingAndGlyphs">1000</text>
<text x="1912" y="265.5" text-anchor="end" font-size="16" fill="#e8e8e8" textLength="8.3" lengthAdjust="spacingAndGlyphs">0</text>
<text x="1912" y="288.0" text-anchor="end" font-size="16" fill="#e8e8e8" textLength="38.3" lengthAdjust="spacingAndGlyphs">-1000</text>
<path d="M37.5,394.2 H1853.5" stroke="#161616" stroke-width="1.5" stroke-dasharray="3.75 3.75"/>
<path d="M37.5,411.7 H1853.5" stroke="#161616" stroke-width="1.5" stroke-dasharray="3.75 3.75"/>
<path d="M37.5,429.2 H1853.5" stroke="#161616" stroke-width="1.5" stroke-dasharray="3.75 3.75"/>
<path d="M37.5,446.7 H1853.5" stroke="#161616" stroke-width="1.5" stroke-dasharray="3.75 3.75"/>
<path d="M37.5,464.2 H1853.5" stroke="#161616" stroke-width="1.5" stroke-dasharray="3.75 3.75"/>
<polyline points="37.0,426.5 72.0,428.0 95.0,428.5 113.0,422.5 138.0,419.0 159.0,419.0 197.0,422.5 228.0,418.8 259.0,421.0 309.0,426.7 322.0,434.4 342.5,448.0 363.0,454.0 395.0,456.0 422.0,460.4 478.0,454.0 537.0,450.0 572.0,451.7 620.0,445.4 632.5,446.2 666.0,455.2 689.0,455.6 722.0,451.0 753.0,445.8 785.0,442.0 816.0,438.5 840.0,440.0 872.5,439.0 893.0,439.6 945.0,443.0 972.5,439.0 991.0,433.8 1056.0,433.8 1068.0,439.0 1102.0,458.3 1118.0,460.4 1179.0,452.5 1210.0,464.0 1227.0,466.2 1273.0,463.5 1325.0,449.4 1362.5,451.7 1398.0,447.5 1429.0,439.2 1475.0,449.4 1512.5,444.8 1554.0,433.0 1583.0,428.5" fill="none" stroke="#ffffd8" stroke-width="1.3"/>
<polyline points="37.0,438.5 45.0,435.0 60.0,437.0 90.0,440.0 180.0,440.0 200.0,438.0 240.0,440.0 300.0,438.0 330.0,436.0 380.0,436.0 400.0,439.0 440.0,436.0 500.0,436.0 540.0,440.0 570.0,436.0 590.0,434.5 605.0,440.0 640.0,438.0 670.0,435.0 700.0,436.0 740.0,440.0 800.0,441.0 830.0,440.0 850.0,439.0 880.0,435.0 920.0,434.5 950.0,437.0 980.0,440.0 1050.0,440.0 1075.0,434.0 1120.0,434.0 1140.0,436.0 1146.0,438.5 1165.0,435.0 1200.0,434.0 1245.0,434.0 1260.0,437.0 1280.0,434.0 1300.0,438.0 1320.0,440.0 1345.0,439.0 1380.0,436.5 1400.0,439.0 1430.0,441.0 1450.0,436.0 1480.0,434.0 1495.0,438.0 1510.0,438.0 1530.0,440.2 1583.0,440.2" fill="none" stroke="#ffff00" stroke-width="1.15"/>
<polyline points="37.0,445.8 45.8,455.2 61.3,437.7 76.9,437.7 92.4,437.7 107.9,437.7 123.4,437.7 139.0,437.7 154.5,437.7 170.0,455.2 185.6,437.7 201.1,437.7 216.6,437.7 232.2,437.7 247.7,445.8 263.2,437.7 278.8,437.7 294.3,437.7 309.8,437.7 325.3,437.7 340.9,437.7 356.4,437.7 371.9,437.7 387.5,428.8 403.0,437.7 418.5,437.7 434.1,420.4 449.6,437.7 465.1,437.7 480.6,437.7 496.2,437.7 511.7,437.7 527.2,437.7 542.8,437.7 558.3,437.7 573.8,437.7 589.3,433.0 604.9,437.7 620.4,437.7 635.9,437.7 651.5,437.7 667.0,437.7 682.5,428.8 698.1,437.7 713.6,437.7 729.1,437.7 744.6,437.7 760.2,437.7 775.7,437.7 791.2,437.7 806.8,437.7 822.3,437.7 837.8,437.7 853.4,437.7 868.9,437.7 884.4,437.7 899.9,437.7 915.5,437.7 931.0,437.7 946.5,437.7 962.1,437.7 977.6,437.7 993.1,437.7 1008.7,437.7 1024.2,437.7 1039.7,437.7 1055.2,437.7 1070.8,437.7 1086.3,437.7 1101.8,437.7 1117.4,437.7 1132.9,419.8 1148.4,437.7 1164.0,437.7 1179.5,437.7 1195.0,437.7 1210.5,437.7 1226.1,437.7 1241.6,419.8 1257.1,437.7 1272.7,437.7 1288.2,428.8 1303.7,437.7 1319.3,437.7 1334.8,437.7 1350.3,437.7 1365.8,437.7 1381.4,432.3 1396.9,437.7 1412.4,437.7 1428.0,437.7 1443.5,437.7 1459.0,437.7 1474.6,437.7 1490.1,432.3 1505.6,437.7 1521.1,437.7 1536.7,437.7 1552.2,437.7 1567.7,437.7 1583.3,437.7" fill="none" stroke="#000" stroke-width="2.2" stroke-linejoin="miter"/>
<polyline points="37.0,453.0 45.8,464.0 154.5,464.0 170.6,481.2 231.7,481.2 247.7,490.6 372.0,490.6 387.4,428.8 418.5,428.8 434.0,411.5 574.0,411.5 589.0,406.2 667.0,406.2 682.5,398.0 1117.0,398.0 1133.0,380.6 1226.0,380.6 1241.6,362.5 1272.7,362.5 1288.2,354.0 1366.0,354.0 1381.4,350.4 1474.6,350.4 1490.0,345.4 1583.0,345.4" fill="none" stroke="#980000" stroke-width="4" stroke-linejoin="round"/>
<circle cx="1583.3" cy="345.4" r="2" fill="#980000"/>
<path d="M1396.9,331 V503" stroke="#ff2020" stroke-width="1.2"/>
<path d="M1583.3,331 V503" stroke="#30d030" stroke-width="1"/>
<path d="M1854.5,331 V503" stroke="#f4f4f4" stroke-width="1.6" fill="none"/>
<path d="M1854.5,350.2 h11 M1854.5,394.0 h11 M1854.5,437.8 h11 M1854.5,481.6 h11 M1854.5,499.1 h5 M1854.5,490.4 h5 M1854.5,472.8 h5 M1854.5,464.1 h5 M1854.5,455.3 h5 M1854.5,446.6 h5 M1854.5,429.0 h5 M1854.5,420.3 h5 M1854.5,411.5 h5 M1854.5,402.8 h5 M1854.5,385.2 h5 M1854.5,376.5 h5 M1854.5,367.7 h5 M1854.5,359.0 h5 M1854.5,341.4 h5 M1854.5,332.7 h5 " stroke="#f4f4f4" stroke-width="1.4" fill="none"/>
<text x="1912" y="356.3" text-anchor="end" font-size="16" fill="#e8e8e8" textLength="25.0" lengthAdjust="spacingAndGlyphs">100</text>
<text x="1912" y="400.1" text-anchor="end" font-size="16" fill="#e8e8e8" textLength="16.6" lengthAdjust="spacingAndGlyphs">50</text>
<text x="1912" y="443.9" text-anchor="end" font-size="16" fill="#e8e8e8" textLength="8.3" lengthAdjust="spacingAndGlyphs">0</text>
<text x="1912" y="487.7" text-anchor="end" font-size="16" fill="#e8e8e8" textLength="21.6" lengthAdjust="spacingAndGlyphs">-50</text>
<path d="M45.8,652.0 V667.0" stroke="#ff6a1e" stroke-width="1.3"/>
<rect x="39.3" y="642.0" width="13" height="10.0" fill="#ff6a1e"/>
<path d="M61.3,640.8 V646.3" stroke="#7d97b8" stroke-width="1.3"/>
<path d="M61.3,653.0 V655.8" stroke="#7d97b8" stroke-width="1.3"/>
<rect x="55.5" y="646.9" width="11.6" height="5.5" fill="none" stroke="#7d97b8" stroke-width="1.3"/>
<path d="M76.9,640.0 V646.3" stroke="#ff6a1e" stroke-width="1.3"/>
<path d="M76.9,648.3 V650.0" stroke="#ff6a1e" stroke-width="1.3"/>
<rect x="70.4" y="646.3" width="13" height="2.0" fill="#ff6a1e"/>
<path d="M92.4,649.7 V652.5" stroke="#7d97b8" stroke-width="1.3"/>
<rect x="86.6" y="638.1" width="11.6" height="11.0" fill="none" stroke="#7d97b8" stroke-width="1.3"/>
<rect x="102.1" y="615.9" width="11.6" height="13.0" fill="none" stroke="#7d97b8" stroke-width="1.3"/>
<rect x="117.6" y="606.4" width="11.6" height="8.8" fill="none" stroke="#7d97b8" stroke-width="1.3"/>
<path d="M139.0,604.2 V606.2" stroke="#ff6a1e" stroke-width="1.3"/>
<path d="M139.0,607.2 V612.5" stroke="#ff6a1e" stroke-width="1.3"/>
<rect x="132.5" y="606.2" width="13" height="1.2" fill="#ff6a1e"/>
<path d="M154.5,608.7 V614.7" stroke="#7d97b8" stroke-width="1.3"/>
<rect x="148.7" y="607.3" width="11.6" height="0.8" fill="none" stroke="#7d97b8" stroke-width="1.3"/>
<path d="M170.0,601.3 V602.5" stroke="#7d97b8" stroke-width="1.3"/>
<path d="M170.0,607.0 V608.7" stroke="#7d97b8" stroke-width="1.3"/>
<rect x="164.2" y="603.1" width="11.6" height="3.3" fill="none" stroke="#7d97b8" stroke-width="1.3"/>
<path d="M185.6,604.2 V605.8" stroke="#7d97b8" stroke-width="1.3"/>
<rect x="179.8" y="602.3" width="11.6" height="1.3" fill="none" stroke="#7d97b8" stroke-width="1.3"/>
<rect x="194.6" y="601.0" width="13" height="1.2" fill="#ff6a1e"/>
<rect x="210.8" y="578.1" width="11.6" height="16.0" fill="none" stroke="#7d97b8" stroke-width="1.3"/>
<path d="M232.2,572.2 V576.3" stroke="#ff6a1e" stroke-width="1.3"/>
<rect x="225.7" y="576.3" width="13" height="3.4" fill="#ff6a1e"/>
<path d="M247.7,576.3 V580.0" stroke="#ff6a1e" stroke-width="1.3"/>
<path d="M247.7,587.0 V589.7" stroke="#ff6a1e" stroke-width="1.3"/>
<rect x="241.2" y="580.0" width="13" height="7.0" fill="#ff6a1e"/>
<path d="M263.2,588.3 V590.8" stroke="#7d97b8" stroke-width="1.3"/>
<rect x="257.4" y="582.3" width="11.6" height="5.4" fill="none" stroke="#7d97b8" stroke-width="1.3"/>
<path d="M278.8,576.3 V577.8" stroke="#7d97b8" stroke-width="1.3"/>
<path d="M278.8,581.7 V584.7" stroke="#7d97b8" stroke-width="1.3"/>
<rect x="272.9" y="578.4" width="11.6" height="2.7" fill="none" stroke="#7d97b8" stroke-width="1.3"/>
<path d="M294.3,580.8 V584.7" stroke="#ff6a1e" stroke-width="1.3"/>
<rect x="287.8" y="577.5" width="13" height="3.3" fill="#ff6a1e"/>
<rect x="304.0" y="578.1" width="11.6" height="3.3" fill="none" stroke="#7d97b8" stroke-width="1.3"/>
<path d="M325.3,634.7 V635.8" stroke="#ff6a1e" stroke-width="1.3"/>
<rect x="318.8" y="620.0" width="13" height="14.7" fill="#ff6a1e"/>
<path d="M340.9,649.7 V650.8" stroke="#ff6a1e" stroke-width="1.3"/>
<rect x="334.4" y="635.0" width="13" height="14.7" fill="#ff6a1e"/>
<path d="M356.4,647.5 V649.7" stroke="#ff6a1e" stroke-width="1.3"/>
<rect x="349.9" y="649.7" width="13" height="2.3" fill="#ff6a1e"/>
<path d="M371.9,644.7 V650.0" stroke="#7d97b8" stroke-width="1.3"/>
<rect x="366.1" y="650.6" width="11.6" height="1.8" fill="none" stroke="#7d97b8" stroke-width="1.3"/>
<path d="M387.5,642.5 V648.3" stroke="#7d97b8" stroke-width="1.3"/>
<rect x="381.7" y="648.9" width="11.6" height="1.0" fill="none" stroke="#7d97b8" stroke-width="1.3"/>
<path d="M403.0,648.3 V649.7" stroke="#ff6a1e" stroke-width="1.3"/>
<rect x="396.5" y="649.7" width="13" height="13.6" fill="#ff6a1e"/>
<path d="M418.5,679.7 V685.8" stroke="#ff6a1e" stroke-width="1.3"/>
<rect x="412.0" y="663.3" width="13" height="16.4" fill="#ff6a1e"/>
<path d="M434.1,667.5 V670.0" stroke="#7d97b8" stroke-width="1.3"/>
<path d="M434.1,675.8 V681.2" stroke="#7d97b8" stroke-width="1.3"/>
<rect x="428.2" y="670.6" width="11.6" height="4.6" fill="none" stroke="#7d97b8" stroke-width="1.3"/>
<path d="M449.6,666.7 V667.5" stroke="#7d97b8" stroke-width="1.3"/>
<path d="M449.6,670.8 V688.3" stroke="#7d97b8" stroke-width="1.3"/>
<rect x="443.8" y="668.1" width="11.6" height="2.1" fill="none" stroke="#7d97b8" stroke-width="1.3"/>
<path d="M465.1,664.2 V667.5" stroke="#ff6a1e" stroke-width="1.3"/>
<path d="M465.1,670.8 V673.3" stroke="#ff6a1e" stroke-width="1.3"/>
<rect x="458.6" y="667.5" width="13" height="3.3" fill="#ff6a1e"/>
<path d="M480.6,666.7 V669.2" stroke="#7d97b8" stroke-width="1.3"/>
<path d="M480.6,672.5 V674.2" stroke="#7d97b8" stroke-width="1.3"/>
<rect x="474.8" y="669.8" width="11.6" height="2.1" fill="none" stroke="#7d97b8" stroke-width="1.3"/>
<path d="M496.2,665.8 V668.7" stroke="#ff6a1e" stroke-width="1.3"/>
<path d="M496.2,679.7 V682.5" stroke="#ff6a1e" stroke-width="1.3"/>
<rect x="489.7" y="668.7" width="13" height="11.0" fill="#ff6a1e"/>
<path d="M511.7,677.5 V680.3" stroke="#ff6a1e" stroke-width="1.3"/>
<path d="M511.7,683.3 V685.0" stroke="#ff6a1e" stroke-width="1.3"/>
<rect x="505.2" y="680.3" width="13" height="3.0" fill="#ff6a1e"/>
<path d="M527.2,670.0 V672.5" stroke="#7d97b8" stroke-width="1.3"/>
<path d="M527.2,684.7 V692.5" stroke="#7d97b8" stroke-width="1.3"/>
<rect x="521.4" y="673.1" width="11.6" height="11.0" fill="none" stroke="#7d97b8" stroke-width="1.3"/>
<path d="M542.8,680.8 V684.7" stroke="#7d97b8" stroke-width="1.3"/>
<rect x="537.0" y="669.3" width="11.6" height="10.9" fill="none" stroke="#7d97b8" stroke-width="1.3"/>
<path d="M558.3,665.0 V668.7" stroke="#ff6a1e" stroke-width="1.3"/>
<rect x="551.8" y="668.7" width="13" height="22.1" fill="#ff6a1e"/>
<path d="M573.8,685.0 V690.8" stroke="#ff6a1e" stroke-width="1.3"/>
<path d="M573.8,693.0 V696.3" stroke="#ff6a1e" stroke-width="1.3"/>
<rect x="567.3" y="690.8" width="13" height="2.2" fill="#ff6a1e"/>
<path d="M589.3,694.7 V697.5" stroke="#7d97b8" stroke-width="1.3"/>
<rect x="583.5" y="686.9" width="11.6" height="7.2" fill="none" stroke="#7d97b8" stroke-width="1.3"/>
<path d="M604.9,673.3 V682.8" stroke="#7d97b8" stroke-width="1.3"/>
<rect x="599.1" y="683.4" width="11.6" height="2.7" fill="none" stroke="#7d97b8" stroke-width="1.3"/>
<rect x="613.9" y="682.2" width="13" height="11.1" fill="#ff6a1e"/>
<path d="M635.9,691.7 V693.7" stroke="#ff6a1e" stroke-width="1.3"/>
<path d="M635.9,697.0 V706.7" stroke="#ff6a1e" stroke-width="1.3"/>
<rect x="629.4" y="693.7" width="13" height="3.3" fill="#ff6a1e"/>
<rect x="645.0" y="710.0" width="13" height="23.3" fill="#ff6a1e"/>
<path d="M667.0,713.3 V726.3" stroke="#7d97b8" stroke-width="1.3"/>
<rect x="661.2" y="726.9" width="11.6" height="7.2" fill="none" stroke="#7d97b8" stroke-width="1.3"/>
<path d="M682.5,720.8 V722.5" stroke="#7d97b8" stroke-width="1.3"/>
<path d="M682.5,728.3 V730.0" stroke="#7d97b8" stroke-width="1.3"/>
<rect x="676.7" y="723.1" width="11.6" height="4.6" fill="none" stroke="#7d97b8" stroke-width="1.3"/>
<path d="M698.1,727.0 V733.3" stroke="#ff6a1e" stroke-width="1.3"/>
<rect x="691.6" y="722.5" width="13" height="4.5" fill="#ff6a1e"/>
<path d="M713.6,725.8 V727.0" stroke="#ff6a1e" stroke-width="1.3"/>
<path d="M713.6,730.8 V733.3" stroke="#ff6a1e" stroke-width="1.3"/>
<rect x="707.1" y="727.0" width="13" height="3.8" fill="#ff6a1e"/>
<path d="M729.1,717.5 V720.3" stroke="#7d97b8" stroke-width="1.3"/>
<rect x="723.3" y="720.9" width="11.6" height="10.5" fill="none" stroke="#7d97b8" stroke-width="1.3"/>
<path d="M744.6,710.8 V715.3" stroke="#7d97b8" stroke-width="1.3"/>
<path d="M744.6,720.8 V723.3" stroke="#7d97b8" stroke-width="1.3"/>
<rect x="738.9" y="715.9" width="11.6" height="4.3" fill="none" stroke="#7d97b8" stroke-width="1.3"/>
<path d="M760.2,716.7 V720.3" stroke="#ff6a1e" stroke-width="1.3"/>
<path d="M760.2,728.0 V733.7" stroke="#ff6a1e" stroke-width="1.3"/>
<rect x="754.4" y="720.9" width="11.6" height="6.5" fill="none" stroke="#ff6a1e" stroke-width="1.3"/>
<path d="M775.7,705.8 V712.5" stroke="#7d97b8" stroke-width="1.3"/>
<path d="M775.7,720.8 V723.3" stroke="#7d97b8" stroke-width="1.3"/>
<rect x="769.9" y="713.1" width="11.6" height="7.1" fill="none" stroke="#7d97b8" stroke-width="1.3"/>
<path d="M791.2,707.5 V711.3" stroke="#ff6a1e" stroke-width="1.3"/>
<path d="M791.2,721.2 V722.5" stroke="#ff6a1e" stroke-width="1.3"/>
<rect x="784.7" y="711.3" width="13" height="9.9" fill="#ff6a1e"/>
<path d="M806.8,710.8 V712.5" stroke="#7d97b8" stroke-width="1.3"/>
<path d="M806.8,722.0 V724.7" stroke="#7d97b8" stroke-width="1.3"/>
<rect x="801.0" y="713.1" width="11.6" height="8.3" fill="none" stroke="#7d97b8" stroke-width="1.3"/>
<path d="M822.3,715.8 V718.3" stroke="#ff6a1e" stroke-width="1.3"/>
<rect x="815.8" y="711.3" width="13" height="4.5" fill="#ff6a1e"/>
<path d="M837.8,717.5 V719.2" stroke="#7d97b8" stroke-width="1.3"/>
<rect x="832.0" y="714.4" width="11.6" height="2.5" fill="none" stroke="#7d97b8" stroke-width="1.3"/>
<path d="M853.4,691.7 V698.7" stroke="#7d97b8" stroke-width="1.3"/>
<rect x="847.6" y="699.3" width="11.6" height="14.6" fill="none" stroke="#7d97b8" stroke-width="1.3"/>
<rect x="862.4" y="713.3" width="13" height="11.7" fill="#ff6a1e"/>
<path d="M884.4,725.3 V730.8" stroke="#7d97b8" stroke-width="1.3"/>
<rect x="878.6" y="721.9" width="11.6" height="2.8" fill="none" stroke="#7d97b8" stroke-width="1.3"/>
<path d="M899.9,713.3 V715.3" stroke="#7d97b8" stroke-width="1.3"/>
<path d="M899.9,722.0 V723.3" stroke="#7d97b8" stroke-width="1.3"/>
<rect x="894.1" y="715.9" width="11.6" height="5.5" fill="none" stroke="#7d97b8" stroke-width="1.3"/>
<path d="M915.5,712.5 V715.0" stroke="#ff6a1e" stroke-width="1.3"/>
<rect x="909.0" y="715.0" width="13" height="8.3" fill="#ff6a1e"/>
<path d="M931.0,722.0 V723.3" stroke="#ff6a1e" stroke-width="1.3"/>
<rect x="924.5" y="723.3" width="13" height="16.7" fill="#ff6a1e"/>
<path d="M946.5,727.5 V729.2" stroke="#7d97b8" stroke-width="1.3"/>
<rect x="940.7" y="729.8" width="11.6" height="10.4" fill="none" stroke="#7d97b8" stroke-width="1.3"/>
<path d="M962.1,715.8 V724.2" stroke="#7d97b8" stroke-width="1.3"/>
<path d="M962.1,729.5 V730.8" stroke="#7d97b8" stroke-width="1.3"/>
<rect x="956.3" y="724.8" width="11.6" height="4.1" fill="none" stroke="#7d97b8" stroke-width="1.3"/>
<path d="M977.6,708.7 V711.3" stroke="#7d97b8" stroke-width="1.3"/>
<rect x="971.8" y="711.9" width="11.6" height="3.0" fill="none" stroke="#7d97b8" stroke-width="1.3"/>
<path d="M993.1,706.3 V711.3" stroke="#ff6a1e" stroke-width="1.3"/>
<path d="M993.1,713.7 V715.0" stroke="#ff6a1e" stroke-width="1.3"/>
<rect x="986.6" y="711.3" width="13" height="2.4" fill="#ff6a1e"/>
<path d="M1008.7,714.5 V715.8" stroke="#7d97b8" stroke-width="1.3"/>
<rect x="1002.9" y="713.4" width="11.6" height="0.6" fill="none" stroke="#7d97b8" stroke-width="1.3"/>
<path d="M1024.2,708.7 V712.2" stroke="#ff6a1e" stroke-width="1.3"/>
<rect x="1017.7" y="712.2" width="13" height="1.2" fill="#ff6a1e"/>
<path d="M1039.7,706.3 V708.0" stroke="#7d97b8" stroke-width="1.3"/>
<rect x="1033.9" y="708.6" width="11.6" height="5.3" fill="none" stroke="#7d97b8" stroke-width="1.3"/>
<path d="M1055.2,695.0 V706.3" stroke="#7d97b8" stroke-width="1.3"/>
<path d="M1055.2,708.0 V744.7" stroke="#7d97b8" stroke-width="1.3"/>
<rect x="1049.5" y="706.9" width="11.6" height="0.6" fill="none" stroke="#7d97b8" stroke-width="1.3"/>
<path d="M1070.8,701.3 V705.0" stroke="#ff6a1e" stroke-width="1.3"/>
<rect x="1064.3" y="705.0" width="13" height="57.0" fill="#ff6a1e"/>
<path d="M1086.3,761.3 V766.3" stroke="#ff6a1e" stroke-width="1.3"/>
<path d="M1086.3,777.0 V779.7" stroke="#ff6a1e" stroke-width="1.3"/>
<rect x="1079.8" y="766.3" width="13" height="10.7" fill="#ff6a1e"/>
<path d="M1101.8,768.7 V777.5" stroke="#ff6a1e" stroke-width="1.3"/>
<rect x="1095.3" y="777.5" width="13" height="4.5" fill="#ff6a1e"/>
<path d="M1117.4,775.3 V780.5" stroke="#7d97b8" stroke-width="1.3"/>
<path d="M1117.4,783.3 V784.7" stroke="#7d97b8" stroke-width="1.3"/>
<rect x="1111.6" y="781.1" width="11.6" height="1.6" fill="none" stroke="#7d97b8" stroke-width="1.3"/>
<path d="M1132.9,771.3 V776.7" stroke="#7d97b8" stroke-width="1.3"/>
<rect x="1127.1" y="777.3" width="11.6" height="2.6" fill="none" stroke="#7d97b8" stroke-width="1.3"/>
<path d="M1148.4,772.5 V774.2" stroke="#7d97b8" stroke-width="1.3"/>
<path d="M1148.4,777.2 V782.0" stroke="#7d97b8" stroke-width="1.3"/>
<rect x="1142.6" y="774.8" width="11.6" height="1.8" fill="none" stroke="#7d97b8" stroke-width="1.3"/>
<path d="M1164.0,774.7 V783.7" stroke="#ff6a1e" stroke-width="1.3"/>
<rect x="1157.5" y="773.7" width="13" height="1.2" fill="#ff6a1e"/>
<path d="M1179.5,762.2 V775.3" stroke="#ff6a1e" stroke-width="1.3"/>
<rect x="1173.0" y="775.3" width="13" height="5.5" fill="#ff6a1e"/>
<rect x="1188.5" y="798.7" width="13" height="19.6" fill="#ff6a1e"/>
<path d="M1210.5,813.3 V818.3" stroke="#ff6a1e" stroke-width="1.3"/>
<rect x="1204.0" y="818.3" width="13" height="1.4" fill="#ff6a1e"/>
<path d="M1226.1,812.2 V819.2" stroke="#ff6a1e" stroke-width="1.3"/>
<path d="M1226.1,823.3 V827.0" stroke="#ff6a1e" stroke-width="1.3"/>
<rect x="1219.6" y="819.2" width="13" height="4.1" fill="#ff6a1e"/>
<path d="M1241.6,824.0 V834.7" stroke="#ff6a1e" stroke-width="1.3"/>
<rect x="1235.1" y="823.0" width="13" height="1.2" fill="#ff6a1e"/>
<path d="M1257.1,822.5 V825.0" stroke="#ff6a1e" stroke-width="1.3"/>
<path d="M1257.1,827.0 V830.8" stroke="#ff6a1e" stroke-width="1.3"/>
<rect x="1250.6" y="825.0" width="13" height="2.0" fill="#ff6a1e"/>
<path d="M1272.7,824.7 V827.5" stroke="#ff6a1e" stroke-width="1.3"/>
<rect x="1266.2" y="827.5" width="13" height="15.8" fill="#ff6a1e"/>
<rect x="1282.4" y="817.3" width="11.6" height="26.8" fill="none" stroke="#7d97b8" stroke-width="1.3"/>
<path d="M1303.7,824.7 V827.5" stroke="#7d97b8" stroke-width="1.3"/>
<rect x="1297.9" y="814.8" width="11.6" height="9.3" fill="none" stroke="#7d97b8" stroke-width="1.3"/>
<path d="M1319.3,805.8 V813.8" stroke="#7d97b8" stroke-width="1.3"/>
<path d="M1319.3,815.8 V820.0" stroke="#7d97b8" stroke-width="1.3"/>
<rect x="1313.5" y="814.4" width="11.6" height="0.8" fill="none" stroke="#7d97b8" stroke-width="1.3"/>
<path d="M1334.8,812.0 V813.7" stroke="#ff6a1e" stroke-width="1.3"/>
<path d="M1334.8,823.3 V832.5" stroke="#ff6a1e" stroke-width="1.3"/>
<rect x="1328.3" y="813.7" width="13" height="9.6" fill="#ff6a1e"/>
<path d="M1350.3,830.8 V840.0" stroke="#ff6a1e" stroke-width="1.3"/>
<rect x="1343.8" y="823.7" width="13" height="7.1" fill="#ff6a1e"/>
<path d="M1365.8,843.3 V845.8" stroke="#ff6a1e" stroke-width="1.3"/>
<rect x="1359.3" y="831.2" width="13" height="12.1" fill="#ff6a1e"/>
<path d="M1381.4,829.2 V831.3" stroke="#7d97b8" stroke-width="1.3"/>
<rect x="1375.6" y="831.9" width="11.6" height="12.2" fill="none" stroke="#7d97b8" stroke-width="1.3"/>
<rect x="1390.4" y="831.2" width="13" height="7.1" fill="#ff6a1e"/>
<path d="M1412.4,802.5 V814.7" stroke="#7d97b8" stroke-width="1.3"/>
<rect x="1406.6" y="815.3" width="11.6" height="6.1" fill="none" stroke="#7d97b8" stroke-width="1.3"/>
<path d="M1428.0,814.2 V828.3" stroke="#ff6a1e" stroke-width="1.3"/>
<rect x="1421.5" y="813.0" width="13" height="1.2" fill="#ff6a1e"/>
<rect x="1437.0" y="814.7" width="13" height="25.0" fill="#ff6a1e"/>
<path d="M1459.0,847.0 V855.8" stroke="#ff6a1e" stroke-width="1.3"/>
<rect x="1452.5" y="840.0" width="13" height="7.0" fill="#ff6a1e"/>
<path d="M1474.6,853.3 V856.7" stroke="#ff6a1e" stroke-width="1.3"/>
<rect x="1468.1" y="847.5" width="13" height="5.8" fill="#ff6a1e"/>
<path d="M1490.1,837.5 V840.0" stroke="#7d97b8" stroke-width="1.3"/>
<rect x="1484.3" y="840.6" width="11.6" height="13.0" fill="none" stroke="#7d97b8" stroke-width="1.3"/>
<path d="M1505.6,843.3 V850.8" stroke="#ff6a1e" stroke-width="1.3"/>
<rect x="1499.1" y="839.7" width="13" height="3.6" fill="#ff6a1e"/>
<path d="M1521.1,836.3 V839.2" stroke="#7d97b8" stroke-width="1.3"/>
<path d="M1521.1,841.7 V846.7" stroke="#7d97b8" stroke-width="1.3"/>
<rect x="1515.3" y="839.8" width="11.6" height="1.3" fill="none" stroke="#7d97b8" stroke-width="1.3"/>
<path d="M1536.7,821.3 V826.3" stroke="#7d97b8" stroke-width="1.3"/>
<path d="M1536.7,839.7 V844.7" stroke="#7d97b8" stroke-width="1.3"/>
<rect x="1530.9" y="826.9" width="11.6" height="12.2" fill="none" stroke="#7d97b8" stroke-width="1.3"/>
<rect x="1546.4" y="815.6" width="11.6" height="10.5" fill="none" stroke="#7d97b8" stroke-width="1.3"/>
<path d="M1567.7,808.7 V812.5" stroke="#7d97b8" stroke-width="1.3"/>
<rect x="1561.9" y="813.1" width="11.6" height="1.6" fill="none" stroke="#7d97b8" stroke-width="1.3"/>
<rect x="1577.5" y="806.9" width="11.6" height="5.0" fill="none" stroke="#7d97b8" stroke-width="1.3"/>
<polyline points="37.0,655.0 45.8,665.3 61.3,653.3 76.9,654.2 92.4,642.5 107.9,611.7 123.4,605.0 139.0,613.3 154.5,610.8 170.0,606.7 185.6,604.2 201.1,605.0 216.6,572.5 232.2,581.7 247.7,593.3 263.2,587.5 278.8,580.0 294.3,585.8 309.8,581.3 325.3,658.3 340.9,665.8 356.4,661.3 371.9,653.0 387.5,653.0 403.0,672.0 418.5,693.0 434.1,675.8 449.6,672.5 465.1,679.7 480.6,674.5 496.2,690.5 511.7,690.5 527.2,675.3 542.8,675.3 558.3,704.2 573.8,705.3 589.3,691.7 604.9,685.8 620.4,700.0 635.9,706.7 651.5,750.8 667.0,735.3 682.5,729.5 698.1,734.2 713.6,738.3 729.1,723.3 744.6,717.0 760.2,726.3 775.7,716.7 791.2,730.8 806.8,717.5 822.3,722.0 837.8,717.5 853.4,699.2 868.9,736.7 884.4,730.0 899.9,720.0 915.5,728.3 931.0,750.8 946.5,734.2 962.1,725.8 977.6,711.3 993.1,716.7 1008.7,716.7 1024.2,716.7 1039.7,708.0 1055.2,714.2 1070.8,789.2 1086.3,803.3 1101.8,799.2 1117.4,787.5 1132.9,780.0 1148.4,777.5 1164.0,779.5 1179.5,787.5 1195.0,838.0 1210.5,830.3 1226.1,830.3 1241.6,831.7 1257.1,833.0 1272.7,853.3 1288.2,817.5 1303.7,817.5 1319.3,820.0 1334.8,835.8 1350.3,840.3 1365.8,855.3 1381.4,836.7 1396.9,844.2 1412.4,813.0 1428.0,820.0 1443.5,853.3 1459.0,861.3 1474.6,864.2 1490.1,842.5 1505.6,850.0 1521.1,843.3 1536.7,832.5 1552.2,817.5 1567.7,814.2 1583.3,810.8" fill="none" stroke="#20c020" stroke-width="1.15"/>
<polyline points="37.0,642.5 45.8,650.8 61.3,638.7 76.9,641.7 92.4,630.8 107.9,602.8 123.4,596.2 139.0,603.7 154.5,602.5 170.0,599.2 185.6,599.2 201.1,600.0 216.6,567.0 232.2,574.7 247.7,585.5 263.2,577.5 278.8,571.3 294.3,577.5 309.8,575.3 325.3,650.8 340.9,656.5 356.4,652.5 371.9,644.2 387.5,644.2 403.0,663.0 418.5,680.8 434.1,663.0 449.6,658.7 465.1,664.2 480.6,663.7 496.2,678.3 511.7,681.7 527.2,665.0 542.8,661.3 558.3,690.0 573.8,690.8 589.3,680.0 604.9,672.5 620.4,690.8 635.9,696.7 651.5,739.2 667.0,721.3 682.5,715.0 698.1,720.8 713.6,727.5 729.1,712.5 744.6,707.5 760.2,716.7 775.7,705.3 791.2,717.5 806.8,705.0 822.3,711.3 837.8,710.0 853.4,691.7 868.9,729.2 884.4,719.2 899.9,708.7 915.5,720.0 931.0,741.7 946.5,722.5 962.1,715.0 977.6,701.3 993.1,709.2 1008.7,709.2 1024.2,710.8 1039.7,702.5 1055.2,700.0 1070.8,765.0 1086.3,776.3 1101.8,772.5 1117.4,767.5 1132.9,769.2 1148.4,769.2 1164.0,771.7 1179.5,778.3 1195.0,826.7 1210.5,820.0 1226.1,819.2 1241.6,821.7 1257.1,824.2 1272.7,842.0 1288.2,805.8 1303.7,803.7 1319.3,805.3 1334.8,820.0 1350.3,830.8 1365.8,842.5 1381.4,823.8 1396.9,831.3 1412.4,800.0 1428.0,807.5 1443.5,838.3 1459.0,845.8 1474.6,851.3 1490.1,830.5 1505.6,838.3 1521.1,832.2 1536.7,817.5 1552.2,806.7 1567.7,803.8 1583.3,800.3" fill="none" stroke="#ff0000" stroke-width="1.15"/>
<path d="M1396.9,537 V900" stroke="#ff0000" stroke-width="1.3"/>
<path d="M1583.3,537 V900" stroke="#20c020" stroke-width="1.1"/>
<path d="M1391.9,775 h8 v16.5 h8 l-12,12 l-12,-12 h8 z" fill="#ff0000"/>
<path d="M1581.3,851.5 l12,12 h-7.5 v16 h-9 v-16 h-7.5 z" fill="#008000"/>
<path d="M40.0,900.7 L47.7,893 M50.0,900.7 L57.7,893 M60.0,900.7 L67.7,893 M70.0,900.7 L77.7,893 M80.0,900.7 L87.7,893 M90.0,900.7 L97.7,893 M100.0,900.7 L107.7,893 M110.0,900.7 L117.7,893 M120.0,900.7 L127.7,893 M130.0,900.7 L137.7,893 M140.0,900.7 L147.7,893 M150.0,900.7 L157.7,893 M160.0,900.7 L167.7,893 M170.0,900.7 L177.7,893 M180.0,900.7 L187.7,893 M190.0,900.7 L197.7,893 M200.0,900.7 L207.7,893 M210.0,900.7 L217.7,893 M220.0,900.7 L227.7,893 M230.0,900.7 L237.7,893 M240.0,900.7 L247.7,893 M250.0,900.7 L257.7,893 M260.0,900.7 L267.7,893 M270.0,900.7 L277.7,893 M280.0,900.7 L287.7,893 M290.0,900.7 L297.7,893 M300.0,900.7 L307.7,893 M310.0,900.7 L317.7,893 M320.0,900.7 L327.7,893 M1580.0,900.7 L1587.7,893 M1590.0,900.7 L1597.7,893 " stroke="#009800" stroke-width="1.15" fill="none"/>
<path d="M336.4,893 L344.1,900.7 M346.4,893 L354.1,900.7 M356.4,893 L364.1,900.7 M366.4,893 L374.1,900.7 M376.4,893 L384.1,900.7 M386.4,893 L394.1,900.7 M396.4,893 L404.1,900.7 M406.4,893 L414.1,900.7 M416.4,893 L424.1,900.7 M426.4,893 L434.1,900.7 M436.4,893 L444.1,900.7 M446.4,893 L454.1,900.7 M456.4,893 L464.1,900.7 M466.4,893 L474.1,900.7 M476.4,893 L484.1,900.7 M486.4,893 L494.1,900.7 M496.4,893 L504.1,900.7 M506.4,893 L514.1,900.7 M516.4,893 L524.1,900.7 M526.4,893 L534.1,900.7 M536.4,893 L544.1,900.7 M546.4,893 L554.1,900.7 M556.4,893 L564.1,900.7 M566.4,893 L574.1,900.7 M576.4,893 L584.1,900.7 M586.4,893 L594.1,900.7 M596.4,893 L604.1,900.7 M606.4,893 L614.1,900.7 M616.4,893 L624.1,900.7 M626.4,893 L634.1,900.7 M636.4,893 L644.1,900.7 M646.4,893 L654.1,900.7 M656.4,893 L664.1,900.7 M666.4,893 L674.1,900.7 M676.4,893 L684.1,900.7 M686.4,893 L694.1,900.7 M696.4,893 L704.1,900.7 M706.4,893 L714.1,900.7 M716.4,893 L724.1,900.7 M726.4,893 L734.1,900.7 M736.4,893 L744.1,900.7 M746.4,893 L754.1,900.7 M756.4,893 L764.1,900.7 M766.4,893 L774.1,900.7 M776.4,893 L784.1,900.7 M786.4,893 L794.1,900.7 M796.4,893 L804.1,900.7 M806.4,893 L814.1,900.7 M816.4,893 L824.1,900.7 M826.4,893 L834.1,900.7 M836.4,893 L844.1,900.7 M846.4,893 L854.1,900.7 M856.4,893 L864.1,900.7 M866.4,893 L874.1,900.7 M876.4,893 L884.1,900.7 M886.4,893 L894.1,900.7 M896.4,893 L904.1,900.7 M906.4,893 L914.1,900.7 M916.4,893 L924.1,900.7 M926.4,893 L934.1,900.7 M936.4,893 L944.1,900.7 M946.4,893 L954.1,900.7 M956.4,893 L964.1,900.7 M966.4,893 L974.1,900.7 M976.4,893 L984.1,900.7 M986.4,893 L994.1,900.7 M996.4,893 L1004.1,900.7 M1006.4,893 L1014.1,900.7 M1016.4,893 L1024.1,900.7 M1026.4,893 L1034.1,900.7 M1036.4,893 L1044.1,900.7 M1046.4,893 L1054.1,900.7 M1056.4,893 L1064.1,900.7 M1066.4,893 L1074.1,900.7 M1076.4,893 L1084.1,900.7 M1086.4,893 L1094.1,900.7 M1096.4,893 L1104.1,900.7 M1106.4,893 L1114.1,900.7 M1116.4,893 L1124.1,900.7 M1126.4,893 L1134.1,900.7 M1136.4,893 L1144.1,900.7 M1146.4,893 L1154.1,900.7 M1156.4,893 L1164.1,900.7 M1166.4,893 L1174.1,900.7 M1176.4,893 L1184.1,900.7 M1186.4,893 L1194.1,900.7 M1196.4,893 L1204.1,900.7 M1206.4,893 L1214.1,900.7 M1216.4,893 L1224.1,900.7 M1226.4,893 L1234.1,900.7 M1236.4,893 L1244.1,900.7 M1246.4,893 L1254.1,900.7 M1256.4,893 L1264.1,900.7 M1266.4,893 L1274.1,900.7 M1396.4,893 L1404.1,900.7 M1406.4,893 L1414.1,900.7 M1416.4,893 L1424.1,900.7 M1426.4,893 L1434.1,900.7 M1436.4,893 L1444.1,900.7 M1446.4,893 L1454.1,900.7 M1456.4,893 L1464.1,900.7 M1466.4,893 L1474.1,900.7 M1476.4,893 L1484.1,900.7 M1486.4,893 L1494.1,900.7 M1496.4,893 L1504.1,900.7 M1506.4,893 L1514.1,900.7 M1516.4,893 L1524.1,900.7 M1526.4,893 L1534.1,900.7 M1536.4,893 L1544.1,900.7 M1546.4,893 L1554.1,900.7 M1556.4,893 L1564.1,900.7 M1566.4,893 L1574.1,900.7 " stroke="#e00000" stroke-width="1.1" fill="none"/>
<path d="M110,894.3 h8 M265,894.3 h8 M802,893 h6 M1330,893 h8 M1476,893 h8 M1579.3,893.5 h8" stroke="#0000d0" stroke-width="1.6"/>
<path d="M1854.5,537 V893" stroke="#f4f4f4" stroke-width="1.6" fill="none"/>
<path d="M1854.5,872.3 h11 M1854.5,843.5 h11 M1854.5,814.6 h11 M1854.5,785.8 h11 M1854.5,756.9 h11 M1854.5,728.1 h11 M1854.5,699.3 h11 M1854.5,670.4 h11 M1854.5,641.6 h11 M1854.5,612.8 h11 M1854.5,583.9 h11 M1854.5,555.1 h11 M1854.5,889.6 h5 M1854.5,883.8 h5 M1854.5,878.1 h5 M1854.5,866.5 h5 M1854.5,860.8 h5 M1854.5,855.0 h5 M1854.5,849.2 h5 M1854.5,837.7 h5 M1854.5,831.9 h5 M1854.5,826.1 h5 M1854.5,820.4 h5 M1854.5,808.8 h5 M1854.5,803.1 h5 M1854.5,797.3 h5 M1854.5,791.5 h5 M1854.5,780.0 h5 M1854.5,774.2 h5 M1854.5,768.5 h5 M1854.5,762.7 h5 M1854.5,751.2 h5 M1854.5,745.4 h5 M1854.5,739.6 h5 M1854.5,733.9 h5 M1854.5,722.3 h5 M1854.5,716.6 h5 M1854.5,710.8 h5 M1854.5,705.0 h5 M1854.5,693.5 h5 M1854.5,687.7 h5 M1854.5,682.0 h5 M1854.5,676.2 h5 M1854.5,664.7 h5 M1854.5,658.9 h5 M1854.5,653.1 h5 M1854.5,647.4 h5 M1854.5,635.8 h5 M1854.5,630.1 h5 M1854.5,624.3 h5 M1854.5,618.5 h5 M1854.5,607.0 h5 M1854.5,601.2 h5 M1854.5,595.5 h5 M1854.5,589.7 h5 M1854.5,578.2 h5 M1854.5,572.4 h5 M1854.5,566.6 h5 M1854.5,560.9 h5 M1854.5,549.3 h5 M1854.5,543.6 h5 M1854.5,537.8 h5 " stroke="#f4f4f4" stroke-width="1.4" fill="none"/>
<text x="1912" y="878.6" text-anchor="end" font-size="16" fill="#e8e8e8" textLength="33.3" lengthAdjust="spacingAndGlyphs">3600</text>
<text x="1912" y="849.7" text-anchor="end" font-size="16" fill="#e8e8e8" textLength="33.3" lengthAdjust="spacingAndGlyphs">3650</text>
<text x="1912" y="820.9" text-anchor="end" font-size="16" fill="#e8e8e8" textLength="33.3" lengthAdjust="spacingAndGlyphs">3700</text>
<text x="1912" y="792.1" text-anchor="end" font-size="16" fill="#e8e8e8" textLength="33.3" lengthAdjust="spacingAndGlyphs">3750</text>
<text x="1912" y="763.2" text-anchor="end" font-size="16" fill="#e8e8e8" textLength="33.3" lengthAdjust="spacingAndGlyphs">3800</text>
<text x="1912" y="734.4" text-anchor="end" font-size="16" fill="#e8e8e8" textLength="33.3" lengthAdjust="spacingAndGlyphs">3850</text>
<text x="1912" y="705.6" text-anchor="end" font-size="16" fill="#e8e8e8" textLength="33.3" lengthAdjust="spacingAndGlyphs">3900</text>
<text x="1912" y="676.7" text-anchor="end" font-size="16" fill="#e8e8e8" textLength="33.3" lengthAdjust="spacingAndGlyphs">3950</text>
<text x="1912" y="647.9" text-anchor="end" font-size="16" fill="#e8e8e8" textLength="33.3" lengthAdjust="spacingAndGlyphs">4000</text>
<text x="1912" y="619.0" text-anchor="end" font-size="16" fill="#e8e8e8" textLength="33.3" lengthAdjust="spacingAndGlyphs">4050</text>
<text x="1912" y="590.2" text-anchor="end" font-size="16" fill="#e8e8e8" textLength="33.3" lengthAdjust="spacingAndGlyphs">4100</text>
<text x="1912" y="561.4" text-anchor="end" font-size="16" fill="#e8e8e8" textLength="33.3" lengthAdjust="spacingAndGlyphs">4150</text>
<rect x="1860" y="796" width="60" height="20.5" fill="#000" stroke="#f4f4f4" stroke-width="1.4"/>
<text x="1862.5" y="811.5" font-size="14.5" fill="#00e000" textLength="55" lengthAdjust="spacingAndGlyphs">3713.000</text>
<rect x="37" y="901" width="1818" height="41" fill="#000"/>
<path d="M37,901.5 H1855 M37,922 H1855" stroke="#f4f4f4" stroke-width="1.5"/>
<path d="M45.8,901 V908.5 M61.3,901 V908.5 M76.9,901 V908.5 M92.4,901 V908.5 M107.9,901 V923.5 M123.4,901 V908.5 M139.0,901 V908.5 M154.5,901 V908.5 M170.0,901 V908.5 M185.6,901 V908.5 M201.1,901 V908.5 M216.6,901 V923.5 M232.2,901 V908.5 M247.7,901 V908.5 M263.2,901 V908.5 M278.8,901 V908.5 M294.3,901 V908.5 M309.8,901 V908.5 M325.3,901 V923.5 M340.9,901 V908.5 M356.4,901 V908.5 M371.9,901 V908.5 M387.5,901 V908.5 M403.0,901 V908.5 M418.5,901 V908.5 M434.1,901 V923.5 M449.6,901 V908.5 M465.1,901 V908.5 M480.6,901 V908.5 M496.2,901 V908.5 M511.7,901 V908.5 M527.2,901 V908.5 M542.8,901 V923.5 M558.3,901 V908.5 M573.8,901 V908.5 M589.3,901 V908.5 M604.9,901 V908.5 M620.4,901 V908.5 M635.9,901 V908.5 M651.5,901 V923.5 M667.0,901 V908.5 M682.5,901 V908.5 M698.1,901 V908.5 M713.6,901 V908.5 M729.1,901 V908.5 M744.6,901 V908.5 M760.2,901 V923.5 M775.7,901 V908.5 M791.2,901 V908.5 M806.8,901 V908.5 M822.3,901 V908.5 M837.8,901 V908.5 M853.4,901 V908.5 M868.9,901 V923.5 M884.4,901 V908.5 M899.9,901 V908.5 M915.5,901 V908.5 M931.0,901 V908.5 M946.5,901 V908.5 M962.1,901 V908.5 M977.6,901 V923.5 M993.1,901 V908.5 M1008.7,901 V908.5 M1024.2,901 V908.5 M1039.7,901 V908.5 M1055.2,901 V908.5 M1070.8,901 V908.5 M1086.3,901 V923.5 M1101.8,901 V908.5 M1117.4,901 V908.5 M1132.9,901 V908.5 M1148.4,901 V908.5 M1164.0,901 V908.5 M1179.5,901 V908.5 M1195.0,901 V923.5 M1210.5,901 V908.5 M1226.1,901 V908.5 M1241.6,901 V908.5 M1257.1,901 V908.5 M1272.7,901 V908.5 M1288.2,901 V908.5 M1303.7,901 V923.5 M1319.3,901 V908.5 M1334.8,901 V908.5 M1350.3,901 V908.5 M1365.8,901 V908.5 M1381.4,901 V908.5 M1396.9,901 V908.5 M1412.4,901 V923.5 M1428.0,901 V908.5 M1443.5,901 V908.5 M1459.0,901 V908.5 M1474.6,901 V908.5 M1490.1,901 V908.5 M1505.6,901 V908.5 M1521.1,901 V923.5 M1536.7,901 V908.5 M1552.2,901 V908.5 M1567.7,901 V908.5 M1583.3,901 V908.5 M1598.8,901 V908.5 M1614.3,901 V908.5 M1629.9,901 V908.5 M1645.4,901 V908.5 M1660.9,901 V908.5 M1676.4,901 V908.5 M1692.0,901 V908.5 M1707.5,901 V908.5 M1723.0,901 V908.5 M1738.6,901 V923.5 M1754.1,901 V908.5 M1769.6,901 V908.5 M1785.2,901 V908.5 M1800.7,901 V908.5 M1816.2,901 V908.5 M1831.7,901 V908.5 M1847.3,901 V908.5 " stroke="#f4f4f4" stroke-width="1.4" fill="none"/>
<text x="109.7" y="917.4" font-size="15" fill="#f0f0f0">9</text>
<text x="218.4" y="917.4" font-size="15" fill="#f0f0f0">12</text>
<text x="327.1" y="917.4" font-size="15" fill="#f0f0f0">13</text>
<text x="435.9" y="917.4" font-size="15" fill="#f0f0f0">14</text>
<text x="544.6" y="917.4" font-size="15" fill="#f0f0f0">15</text>
<text x="653.3" y="917.4" font-size="15" fill="#f0f0f0">16</text>
<text x="762.0" y="917.4" font-size="15" fill="#f0f0f0">19</text>
<text x="870.7" y="917.4" font-size="15" fill="#f0f0f0">20</text>
<text x="979.4" y="917.4" font-size="15" fill="#f0f0f0">21</text>
<text x="1088.1" y="917.4" font-size="15" fill="#f0f0f0">22</text>
<text x="1196.8" y="917.4" font-size="15" fill="#f0f0f0">23</text>
<text x="1305.5" y="917.4" font-size="15" fill="#f0f0f0">26</text>
<text x="1414.2" y="917.4" font-size="15" fill="#f0f0f0">27</text>
<text x="1522.9" y="917.4" font-size="15" fill="#f0f0f0">28</text>
<text x="1740.4" y="917.4" font-size="15" fill="#f0f0f0">29</text>
<rect x="1857" y="903" width="60" height="39" fill="#e9e9e9"/>
<rect x="1855" y="901" width="63" height="2" fill="#9a9a9a"/><rect x="1855" y="901" width="2" height="41" fill="#9a9a9a"/>
<circle cx="1884.5" cy="921" r="10.3" fill="none" stroke="#00ee00" stroke-width="1.5"/><circle cx="1880.5" cy="917.5" r="1.5" fill="#00dd00"/><circle cx="1888.5" cy="917.5" r="1.5" fill="#00dd00"/><path d="M1878.5,923.5 q6,7 12,0" fill="none" stroke="#00ee00" stroke-width="1.5"/>
<path d="M1281.0,900.6 H1388.0 M194,900.6 H209" stroke="#ffff00" stroke-width="2.4"/>
</svg>
<div class="a" style="left:37px;top:942px;width:1883px;height:30px;background:#f0f0f0"></div>
<div class="a" style="left:1459px;top:953px;width:183px;height:7px;background:#8c8c8c"></div>
<div class="a" style="left:1665px;top:946px;width:1.5px;height:20px;background:#8e8e8e"></div>
<div class="a" style="left:1726px;top:946px;width:1.5px;height:20px;background:#8e8e8e"></div>
<div class="a" style="left:1838px;top:946px;width:1.5px;height:20px;background:#8e8e8e"></div>
<svg width="260" height="30" style="left:1660px;top:942px"><rect x="13" y="5" width="19" height="19" fill="#eaeaea"/><path d="M16.5,14 a6,6 0 0 1 10.5,-4" fill="none" stroke="#484848" stroke-width="2.4"/><path d="M29.5,5.5 v6.5 h-6.5 z" fill="#484848"/><path d="M28.5,14.5 a6,6 0 0 1 -10.5,4" fill="none" stroke="#484848" stroke-width="2.4"/><path d="M15.5,23 v-6.5 h6.5 z" fill="#484848"/><rect x="40" y="5" width="18" height="19" fill="#ebebeb"/><rect x="48" y="8.5" width="2" height="11" fill="#484848"/><rect x="73" y="5" width="19" height="19" fill="#eaeaea"/><path d="M82.3,7 l3.6,4.5 h-2.4 v5.5 h2.4 l-3.6,4.5 l-3.6,-4.5 h2.4 v-5.5 h-2.4 z" fill="#484848"/><path d="M109,5.5 l3.2,3.8 h-2.1 v4 h4 v-2.1 l3.8,3.2 l-3.8,3.2 v-2.1 h-4 v4 h2.1 l-3.2,3.8 l-3.2,-3.8 h2.1 v-4 h-4 v2.1 l-3.800,-3.2 l3.8,-3.2 v2.1 h4 v-4 h-2.1 z" fill="#484848"/><rect x="126" y="5" width="19" height="19" fill="#ebebeb"/><circle cx="135" cy="14.3" r="6.3" fill="#f4f4f4" stroke="#444" stroke-width="1.4"/><rect x="131.5" y="13.3" width="7" height="2" fill="#484848"/><rect x="152" y="5" width="19" height="19" fill="#ebebeb"/><circle cx="161.3" cy="14.3" r="6.3" fill="#f4f4f4" stroke="#444" stroke-width="1.4"/><path d="M157.8,14.3 h7 M161.3,10.800 v7" stroke="#484848" stroke-width="2"/><rect x="186" y="5" width="19" height="19" fill="#ececec"/><path d="M191,14.3 l7,-5 v10 z" fill="#c2c2c2"/><rect x="212" y="5" width="19" height="19" fill="#ececec"/><path d="M225.500,14.3 l-7,-5 v10 z" fill="#b4b4b4"/><rect x="239.500" y="7" width="14.500" height="14" fill="#fafafa" stroke="#555" stroke-width="1.300"/><rect x="239.500" y="7" width="14.500" height="3" fill="#666"/><path d="M242,13 h1.500 M245,13 h7 M242,15.800 h1.500 M245,15.800 h7 M242,18.600 h1.500 M245,18.600 h7" stroke="#555" stroke-width="1.300"/></svg>
<div class="a" style="left:0;top:971px;width:37px;height:1px;background:#9a9a9a"></div>
<div class="a" style="left:0;top:972px;width:1920px;height:40px;background:linear-gradient(#f4f4f4 0,#ececec 12%,#ececec 100%)"></div>
<div class="a" style="left:0;top:1011px;width:1920px;height:1.5px;background:#a0a0a0"></div>
<div class="a" style="left:0;top:1012.5px;width:1920px;height:1px;background:#f8f8f8"></div>
<div class="a" style="left:0;top:1013.500px;width:1920px;height:7px;background:#3e3e3e"></div>
<div class="a" style="left:0px;top:975px;width:9px;height:35px;background:linear-gradient(90deg,#e4e4e4,#c4c4c4)"></div>
<div class="a" style="left:3px;top:991px;width:3px;height:3px;background:#555"></div>
<div class="a" style="left:8.5px;top:975px;width:1px;height:35px;background:#a6a6a6"></div><div class="a" style="left:9.5px;top:975px;width:1px;height:35px;background:#fafafa"></div>
<div class="a" style="left:10px;top:981px;width:162px;height:25px;box-sizing:border-box;background:#fff;border:1.3px solid #ababab;border-radius:3px"></div>
<svg width="162" height="25" style="left:10px;top:981px"><path d="M20.0,13.3 H121.0" stroke="#2a2a2a" stroke-width="1.4"/><path d="M146.5,11 l4.2,4.500 l4.2,-4.5" fill="none" stroke="#444" stroke-width="1.5"/></svg>
<div class="a" style="left:175.5px;top:979px;width:1px;height:29px;background:#a6a6a6"></div><div class="a" style="left:176.5px;top:979px;width:1px;height:29px;background:#fafafa"></div>
<div class="a" style="left:181px;top:981px;width:124px;height:25px;box-sizing:border-box;background:#fff;border:1.3px solid #ababab;border-radius:3px"></div>
<svg width="124" height="25" style="left:181px;top:981px"><path d="M14.0,13.3 H88.0" stroke="#2a2a2a" stroke-width="1.4"/><path d="M108.5,11 l4.2,4.500 l4.2,-4.5" fill="none" stroke="#444" stroke-width="1.5"/></svg>
<div class="a" style="left:313.5px;top:975px;width:1px;height:35px;background:#a6a6a6"></div><div class="a" style="left:314.5px;top:975px;width:1px;height:35px;background:#fafafa"></div>
<div class="a" style="left:321px;top:975px;width:9px;height:35px;background:linear-gradient(90deg,#e4e4e4,#c4c4c4)"></div>
<div class="a" style="left:324px;top:991px;width:3px;height:3px;background:#555"></div>
<div class="a" style="left:332px;top:978px;width:124px;height:32px;background:#f2f2f2"></div>
<div class="a" style="left:334.5px;top:980.5px;width:12px;height:12px;box-sizing:border-box;background:#e6e6fa;border:1px solid #b8b8b8"></div>
<div class="a" style="left:334.5px;top:995.5px;width:12px;height:12px;box-sizing:border-box;background:#8b0000;border:1px solid #b8b8b8"></div>
<div class="a" style="left:349.5px;top:980.5px;width:12px;height:12px;box-sizing:border-box;background:#ffd700;border:1px solid #b8b8b8"></div>
<div class="a" style="left:349.5px;top:995.5px;width:12px;height:12px;box-sizing:border-box;background:#6a8290;border:1px solid #b8b8b8"></div>
<div class="a" style="left:364.5px;top:980.5px;width:12px;height:12px;box-sizing:border-box;background:#ffff00;border:1px solid #b8b8b8"></div>
<div class="a" style="left:364.5px;top:995.5px;width:12px;height:12px;box-sizing:border-box;background:#0000ff;border:1px solid #b8b8b8"></div>
<div class="a" style="left:379.5px;top:980.5px;width:12px;height:12px;box-sizing:border-box;background:#696969;border:1px solid #b8b8b8"></div>
<div class="a" style="left:379.5px;top:995.5px;width:12px;height:12px;box-sizing:border-box;background:#008c00;border:1px solid #b8b8b8"></div>
<div class="a" style="left:394.5px;top:980.5px;width:12px;height:12px;box-sizing:border-box;background:#32cd32;border:1px solid #b8b8b8"></div>
<div class="a" style="left:394.5px;top:995.5px;width:12px;height:12px;box-sizing:border-box;background:#ff0000;border:1px dotted #fff"></div>
<div class="a" style="left:409.5px;top:980.5px;width:12px;height:12px;box-sizing:border-box;background:#ffffe0;border:1px solid #b8b8b8"></div>
<div class="a" style="left:409.5px;top:995.5px;width:12px;height:12px;box-sizing:border-box;background:#000000;border:1px solid #b8b8b8"></div>
<div class="a" style="left:424.5px;top:980.5px;width:12px;height:12px;box-sizing:border-box;background:#ff6a1e;border:1px solid #b8b8b8"></div>
<div class="a" style="left:424.5px;top:995.5px;width:12px;height:12px;box-sizing:border-box;background:#3a7ca5;border:1px solid #b8b8b8"></div>
<div class="a" style="left:438.5px;top:980.5px;width:12px;height:12px;box-sizing:border-box;background:#98fb98;border:1px solid #b8b8b8"></div>
<div class="a" style="left:438.5px;top:995.5px;width:12px;height:12px;box-sizing:border-box;background:#92d0e4;border:1px solid #b8b8b8"></div>
<svg width="10" height="6" style="left:454px;top:991.500px"><path d="M0,0 h7 l-3.5,4 z" fill="#111"/></svg>
<div class="a" style="left:473.5px;top:975px;width:1px;height:35px;background:#a6a6a6"></div><div class="a" style="left:474.5px;top:975px;width:1px;height:35px;background:#fafafa"></div>
<div class="a" style="left:482px;top:975px;width:9px;height:35px;background:linear-gradient(90deg,#e4e4e4,#c4c4c4)"></div>
<div class="a" style="left:485px;top:991px;width:3px;height:3px;background:#555"></div>
<div class="a" style="left:491.5px;top:975px;width:1px;height:35px;background:#a6a6a6"></div><div class="a" style="left:492.5px;top:975px;width:1px;height:35px;background:#fafafa"></div>
<svg width="22" height="18" style="left:499px;top:987px"><rect x=".7" y=".7" width="19.600" height="15.600" fill="#fdfdfd" stroke="#8aa0b8" stroke-width="1.2"/><rect x=".7" y=".7" width="19.6" height="2.600" fill="#c8d4e4"/><path d="M3,12 l4.500,-3.500 l3,2" fill="none" stroke="#d02020" stroke-width="1.4"/><text x="11.500" y="14.500" font-size="10.500" fill="#222" font-family="Liberation Serif,serif">1</text></svg>
<svg width="22" height="18" style="left:533px;top:987px"><rect x=".7" y=".7" width="19.600" height="15.600" fill="#fdfdfd" stroke="#8aa0b8" stroke-width="1.2"/><rect x=".7" y=".7" width="19.6" height="2.600" fill="#c8d4e4"/><path d="M3,12 l4.500,-3.500 l3,2" fill="none" stroke="#d02020" stroke-width="1.4"/><text x="11.500" y="14.500" font-size="10.500" fill="#222" font-family="Liberation Serif,serif">2</text></svg>
<svg width="22" height="18" style="left:567px;top:987px"><rect x=".7" y=".7" width="19.600" height="15.600" fill="#fdfdfd" stroke="#8aa0b8" stroke-width="1.2"/><rect x=".7" y=".7" width="19.6" height="2.600" fill="#c8d4e4"/><path d="M3,12 l4.500,-3.500 l3,2" fill="none" stroke="#d02020" stroke-width="1.4"/><text x="11.500" y="14.500" font-size="10.500" fill="#222" font-family="Liberation Serif,serif">3</text></svg>
<svg width="22" height="18" style="left:601px;top:987px"><rect x=".7" y=".7" width="19.600" height="15.600" fill="#fdfdfd" stroke="#8aa0b8" stroke-width="1.2"/><rect x=".7" y=".7" width="19.6" height="2.600" fill="#c8d4e4"/><path d="M3,12 l4.500,-3.500 l3,2" fill="none" stroke="#d02020" stroke-width="1.4"/><text x="11.500" y="14.500" font-size="10.500" fill="#222" font-family="Liberation Serif,serif">4</text></svg>
<svg width="22" height="18" style="left:635px;top:987px"><rect x=".7" y=".7" width="19.600" height="15.600" fill="#fdfdfd" stroke="#8aa0b8" stroke-width="1.2"/><rect x=".7" y=".7" width="19.6" height="2.600" fill="#c8d4e4"/><path d="M3,12 l4.500,-3.500 l3,2" fill="none" stroke="#d02020" stroke-width="1.4"/><text x="11.500" y="14.500" font-size="10.500" fill="#222" font-family="Liberation Serif,serif">5</text></svg>
<svg width="22" height="18" style="left:669px;top:987px"><rect x=".7" y=".7" width="19.600" height="15.600" fill="#fdfdfd" stroke="#8aa0b8" stroke-width="1.2"/><rect x=".7" y=".7" width="19.6" height="2.600" fill="#c8d4e4"/><path d="M3,12 l4.500,-3.500 l3,2" fill="none" stroke="#d02020" stroke-width="1.4"/><text x="11.500" y="14.500" font-size="10.500" fill="#222" font-family="Liberation Serif,serif">6</text></svg>
<div class="a" style="left:703.5px;top:975px;width:1px;height:35px;background:#a6a6a6"></div><div class="a" style="left:704.5px;top:975px;width:1px;height:35px;background:#fafafa"></div>
<div class="a" style="left:0;top:1020px;width:1920px;height:60px;background:#1f1e28"></div>
<svg width="40" height="36" style="left:22px;top:1030px"><circle cx="25.500" cy="13" r="7.500" fill="#f5a623"/><path d="M9,30 a6.500,6.500 0 0 1 0,-13 a8.500,8.500 0 0 1 16.500,-1.500 a7.300,7.300 0 0 1 2.500,14.500 z" fill="#e9edf5"/><path d="M9,30 h19 a7.300,7.300 0 0 0 6,-7 q-12,5 -30,2 a6.500,6.500 0 0 0 5,5z" fill="#c3cbdc"/></svg>
<span class="t" style="left:65.0px;top:1031.5px;font-size:15.5px;line-height:17.8095px;color:#ffffff;transform:scaleX(0.8519);transform-origin:0 0;">21°C</span>
<span class="t" style="left:65.0px;top:1051.5px;font-size:15.5px;line-height:17.8095px;color:#ffffff;transform:scaleX(0.9854);transform-origin:0 0;">Ger. Nublado</span>
<svg width="940" height="60" style="left:490px;top:1020px"><defs><linearGradient id="wg" x1="0" y1="0" x2="1" y2="1"><stop offset="0" stop-color="#6ad8ff"/><stop offset="1" stop-color="#1593e6"/></linearGradient><linearGradient id="msg" x1="0" y1="0" x2="0" y2="1"><stop offset="0" stop-color="#4a4a4a"/><stop offset=".55" stop-color="#080808"/><stop offset="1" stop-color="#000"/></linearGradient><linearGradient id="edg" x1="0" y1="0" x2="1" y2="1"><stop offset="0" stop-color="#35c1f1"/><stop offset=".5" stop-color="#2b9ad6"/><stop offset="1" stop-color="#0f5fa8"/></linearGradient></defs><rect x="832" y="5.500" width="48" height="49" rx="5" fill="#2e2d3a" stroke="#3a3946" stroke-width="1"/><rect x="15.5" y="16.0" width="14" height="14" rx="1" fill="url(#wg)"/><rect x="31.0" y="16.0" width="14" height="14" rx="1" fill="url(#wg)"/><rect x="15.5" y="31.5" width="14" height="14" rx="1" fill="url(#wg)"/><rect x="31.0" y="31.5" width="14" height="14" rx="1" fill="url(#wg)"/><circle cx="88" cy="27.500" r="9.800" fill="none" stroke="#f2f2f2" stroke-width="3.200"/><path d="M81,35 L75,42" stroke="#d8d8d8" stroke-width="4" stroke-linecap="round"/><circle cx="140.500" cy="29.500" r="14" fill="#7b6fd8"/><path d="M129,39 l-2.500,6.500 l9,-3z" fill="#7b6fd8"/><rect x="132" y="24" width="11.500" height="11" rx="2.300" fill="#fff"/><path d="M144.500,28 l5,-3 v9 l-5,-3z" fill="#fff"/><rect x="195" y="19" width="14.500" height="22" rx="1" fill="#fff"/><path d="M198,23 h9 M198,26.500 h9 M198,30 h9 M198,33.500 h9 M198,37 h9" stroke="#2b579a" stroke-width="1.400"/><path d="M182,19 l16,-3 v28 l-16,-3z" fill="#2b579a"/><text x="184.300" y="35" font-size="12.500" font-weight="bold" fill="#fff">W</text><rect x="236.0" y="16" width="29.500" height="29.500" rx="3.500" fill="url(#msg)"/><rect x="243.5" y="33" width="3" height="10" fill="#f08a1c"/><rect x="248.5" y="26" width="3.200" height="17" fill="#f59422"/><path d="M253.5,43 h3.500 l3.500,-24.500 h-3.500 z" fill="#ff6e10"/><path d="M291,19.500 q0,-2 2,-2 h8.500 l3,3.500 h14.500 q2,0 2,2 v18 q0,2 -2,2 h-26 q-2,0 -2,-2 z" fill="#e8a91a"/><path d="M291,24.500 h30 v16.500 q0,2 -2,2 h-26 q-2,0 -2,-2z" fill="#ffd55c"/><rect x="296.500" y="37" width="19" height="6" rx="1" fill="#1e83d4"/><rect x="299.500" y="38.500" width="13" height="1.500" fill="#0c5ea4"/><path d="M360.0,30.0 L347.9,23.0 A14,14 0 0 1 372.1,23.0 Z" fill="#ea4335"/><path d="M360.0,30.0 L372.1,23.0 A14,14 0 0 1 360.0,44.0 Z" fill="#fbbc04"/><path d="M360.0,30.0 L360.0,44.0 A14,14 0 0 1 347.9,23.0 Z" fill="#34a853"/><circle cx="360.0" cy="30.0" r="6.500" fill="#fff"/><circle cx="360.0" cy="30.0" r="5.200" fill="#4285f4"/><circle cx="372.500" cy="19" r="9" fill="#f2711c"/><text x="368.300" y="23.500" font-size="11.500" font-weight="bold" fill="#ffe0c4">N</text><rect x="414" y="19.500" width="16" height="21" rx="1" fill="#fff"/><circle cx="423.500" cy="27" r="3.300" fill="none" stroke="#d04423" stroke-width="1.500"/><path d="M419,34 h9 M419,37 h9" stroke="#d04423" stroke-width="1.400"/><path d="M402,19 l16.500,-3 v28 l-16.500,-3z" fill="#d04423"/><text x="405.800" y="35" font-size="13" font-weight="bold" fill="#fff">P</text><path d="M470,15.500 l-9.500,24 h19 z" fill="#ff8a00"/><path d="M466.200,25 h7.600 l1.700,4.500 h-11 z M463,33.500 h14 l1.300,3.500 h-16.600 z" fill="#f4f4f4"/><path d="M458.500,39 h23 l2,5.500 h-27 z" fill="#ff8a00"/><circle cx="525.500" cy="30" r="14.500" fill="url(#edg)"/><path d="M513,23 a14.500,14.500 0 0 1 27,7 q0,6.500 -7,6.500 q-4.500,0 -3.500,-3.500 q1.200,-4.500 -4.500,-6.500 q-7,-2.200 -12,2z" fill="#4fd97a"/><path d="M527,16 a14.500,14.500 0 0 1 13,14 q0,6.500 -7,6.500 q-4.500,0 -3.500,-3.500 q2,-8 -2.500,-17z" fill="#35c6c0" opacity=".7"/><path d="M518.500,30 q0,10.500 11,13.500 q-14,2.500 -18,-9 q.5,-5.500 7,-4.500z" fill="#0c4f9e"/><path d="M521,28.500 q4.500,-2 7,1.500 q1.500,2.500 -1,5.500 q4.500,2 9,-1 q-4,8 -12,6 q-7,-3 -3,-12z" fill="#1f1e28" opacity=".0"/><rect x="579" y="19.500" width="15" height="21" rx="1" fill="#fff"/><path d="M586.500,23 l3,3 l-3,3 l-3,-3z M584,32 h5 v4.500 h-5z" fill="none" stroke="#3955a3" stroke-width="1.300"/><path d="M567,19 l16,-3 v28 l-16,-3z" fill="#3955a3"/><text x="570.300" y="35" font-size="13" font-weight="bold" fill="#fff">V</text><rect x="634" y="19.500" width="15.500" height="21" rx="1" fill="#fff"/><path d="M637,22.500 h10 v15 h-10z M637,26.300 h10 M637,30 h10 M637,33.800 h10 M642,22.500 v15" fill="none" stroke="#1d6f42" stroke-width="1.200"/><path d="M622,19 l16,-3 v28 l-16,-3z" fill="#1d6f42"/><text x="625.300" y="35" font-size="13" font-weight="bold" fill="#fff">X</text><path d="M690.5,30.0 L678.4,23.0 A14,14 0 0 1 702.6,23.0 Z" fill="#ea4335"/><path d="M690.5,30.0 L702.6,23.0 A14,14 0 0 1 690.5,44.0 Z" fill="#fbbc04"/><path d="M690.5,30.0 L690.5,44.0 A14,14 0 0 1 678.4,23.0 Z" fill="#34a853"/><circle cx="690.5" cy="30.0" r="6.500" fill="#fff"/><circle cx="690.5" cy="30.0" r="5.200" fill="#4285f4"/><rect x="734.500" y="15" width="22.500" height="30" rx="2" fill="#8d9aa8"/><rect x="737" y="17.500" width="17.500" height="5.500" fill="#6fd6f6"/><rect x="737.0" y="25.5" width="4.800" height="5" fill="#d8dde2"/><rect x="743.3" y="25.5" width="4.800" height="5" fill="#d8dde2"/><rect x="749.6" y="25.5" width="4.800" height="5" fill="#d8dde2"/><rect x="737.0" y="31.8" width="4.800" height="5" fill="#d8dde2"/><rect x="743.3" y="31.8" width="4.800" height="5" fill="#d8dde2"/><rect x="749.6" y="31.8" width="4.800" height="5" fill="#14508c"/><rect x="737.0" y="38.1" width="4.800" height="5" fill="#d8dde2"/><rect x="743.3" y="38.1" width="4.800" height="5" fill="#d8dde2"/><rect x="749.6" y="38.1" width="4.800" height="5" fill="#14508c"/><rect x="786" y="15" width="30" height="30" fill="#0a8080"/><path d="M801,16.500 v6 M798.500,19 h5" stroke="#111" stroke-width="1.600"/><path d="M801,22.500 q3.500,1.500 2.500,5.500 q4,-4.500 8,-2 q4,3.500 -1.500,9.500 l-.8,3 h-16.400 l-.8,-3 q-5.500,-6 -1.500,-9.500 q4,-2.500 8,2 q-1,-4 2.500,-5.500z" fill="#fff" stroke="#111" stroke-width="1.200"/><path d="M792.500,38.500 h17 v4.500 h-17z" fill="#fff" stroke="#111" stroke-width="1.200"/><path d="M793,36 q8,-2.500 16,0" fill="none" stroke="#111" stroke-width="1"/><rect x="841.5" y="16" width="29.500" height="29.500" rx="3.500" fill="url(#msg)"/><rect x="849.0" y="33" width="3" height="10" fill="#f08a1c"/><rect x="854.0" y="26" width="3.200" height="17" fill="#f59422"/><path d="M859.0,43 h3.500 l3.500,-24.500 h-3.500 z" fill="#ff6e10"/><rect x="846" y="50.500" width="20" height="3.300" rx="1.600" fill="#4cc2ff"/><rect x="896.700" y="15.700" width="28.600" height="28.600" rx="4" fill="none" stroke="#7d1a2c" stroke-width="1.500"/><text x="899.500" y="39" font-size="14.500" fill="#8c1c30">Pro</text><ellipse cx="914.500" cy="21.500" rx="3" ry="1.800" fill="#8c1c30"/><rect x="902" y="21" width="3" height="1.300" fill="#8c1c30"/><rect x="191.8" y="50.500" width="7.500" height="3" rx="1.500" fill="#8e8e92"/><rect x="356.8" y="50.500" width="7.500" height="3" rx="1.500" fill="#8e8e92"/><rect x="631.8" y="50.500" width="7.500" height="3" rx="1.500" fill="#8e8e92"/><rect x="907.2" y="50.500" width="7.500" height="3" rx="1.500" fill="#8e8e92"/></svg>
<svg width="140" height="40" style="left:1620px;top:1030px" fill="none" stroke="#fff" stroke-width="1.600" stroke-linecap="round"><path d="M8,22.500 l7,-7 l7,7"/></svg>
<svg width="36" height="30" style="left:1650px;top:1036px"><path d="M6,19 a4.500,4.500 0 0 1 1,-9 a6.500,6.500 0 0 1 12.500,-.5 a5,5 0 0 1 1,9.500 z" fill="#b4b8c0"/><path d="M5,19 a4,4 0 0 1 3,-6 q6,-1 9,6z" fill="#e8e8ea"/><circle cx="17.500" cy="18.500" r="5.300" fill="#e81123"/><path d="M15.300,16.300 l4.400,4.400 M19.700,16.300 l-4.400,4.400" stroke="#fff" stroke-width="1.500"/></svg>
<svg width="100" height="30" style="left:1685px;top:1036px" fill="none" stroke="#fff" stroke-width="1.500" stroke-linecap="round"><path d="M5.500,10.500 a14,14 0 0 1 19.500,0 M8.500,14 a9.500,9.500 0 0 1 13.500,0 M11.700,17.300 a5,5 0 0 1 7,0"/><circle cx="15.200" cy="20.300" r="1.300" fill="#fff" stroke="none"/><path d="M35.500,11.500 h3.500 l5,-4.500 v15 l-5,-4.500 h-3.500 z" stroke-linejoin="round"/><path d="M47,11 a5,5 0 0 1 0,7.500 M49.800,8.500 a8.500,8.500 0 0 1 0,12.500 M52.500,6 a12,12 0 0 1 0,17.500" /><rect x="70" y="10" width="13" height="10" rx="2"/><path d="M84.500,13 v4"/><rect x="71.500" y="13.500" width="5" height="5" fill="#fff" stroke="none"/><path d="M67.500,6.500 v3 M71,6.500 v3 M66,10 h6.500 v3 a3.200,3.200 0 0 1 -6.500,0 z M69.300,16 v3.500" stroke-width="1.300"/></svg>
<span class="t" style="left:1831.5px;top:1030.5px;font-size:15.5px;line-height:17.8095px;color:#ffffff;transform:scaleX(0.8895);transform-origin:0 0;">18:32</span>
<span class="t" style="left:1789.5px;top:1050.5px;font-size:15.5px;line-height:17.8095px;color:#ffffff;transform:scaleX(0.9862);transform-origin:0 0;">28/09/2022</span>
<div class="a" style="left:1876px;top:1040.500px;width:20px;height:20px;border-radius:10px;background:#4cc2ff"></div>
<span class="t" style="left:1882.8px;top:1043.7px;font-size:13px;line-height:14.937px;color:#0a1a28;">1</span>
<div class="a" style="left:1840px;top:1018px;width:25px;height:2px;background:#e8e8e8"></div><div class="a" style="left:1870px;top:1018px;width:25px;height:2px;background:#dcdcdc"></div>
</body></html>
